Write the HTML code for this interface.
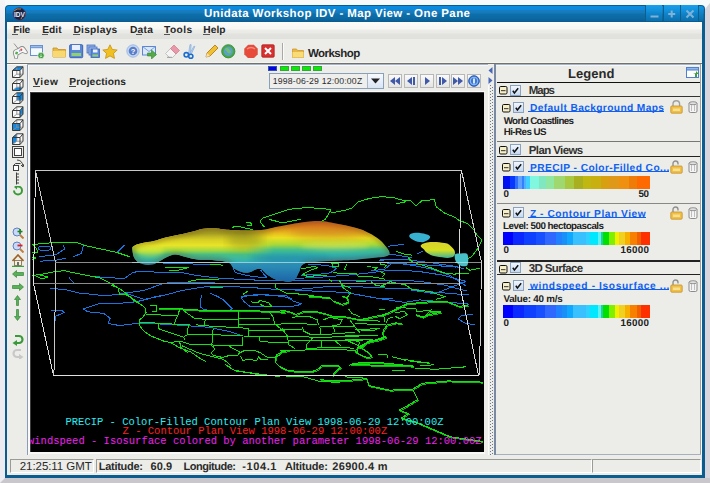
<!DOCTYPE html>
<html><head><meta charset="utf-8">
<style>
*{margin:0;padding:0;box-sizing:border-box}
html,body{width:710px;height:483px;overflow:hidden;background:#f7fafb;font-family:"Liberation Sans",sans-serif;position:relative}
.a{position:absolute;display:block}
.t{position:absolute;white-space:pre;line-height:1;text-rendering:geometricPrecision}
u{text-decoration:underline;text-underline-offset:1px}
</style></head><body>
<div class="a" style="left:0px;top:0px;width:710px;height:483px;background:#f7fafb"></div>
<div class="a" style="left:0px;top:0px;width:5px;height:483px;background:linear-gradient(160deg,#f5f6f8 0,#ecebf1 30px,#ecebf1 100%)"></div>
<div class="a" style="left:705px;top:0px;width:5px;height:483px;background:#d8d6dc"></div>
<svg class="a" style="left:705px;top:0px;" width="5" height="12" viewBox="0 0 5 12"><path d="M0 0H5V3L0 9z" fill="#f7fafb"/></svg>
<div class="a" style="left:0px;top:478px;width:710px;height:5px;background:#c9c7cc"></div>
<svg class="a" style="left:0px;top:478px;" width="6" height="5" viewBox="0 0 6 5"><path d="M0 0H5L0 5z" fill="#eeedf3"/></svg>
<div class="a" style="left:5px;top:5px;width:700px;height:473px;background:#0b5d90;border-radius:4px 4px 0 0"></div>
<div class="a" style="left:6px;top:6px;width:698px;height:15px;border-radius:3px 3px 0 0;background:linear-gradient(#0a8de3 0,#0b88da 4px,#1a7cc4 4px,#147ab8 7px,#0d6fab 8px,#0c69a3 12px,#0a5f96 15px)"></div>
<div class="a" style="left:7px;top:22px;width:695px;height:453px;background:#ecede8"></div>
<div class="a" style="left:7px;top:22px;width:695px;height:17px;background:linear-gradient(#fbfbf9 0,#f6f6f3 7px,#ececE8 8px,#e9e9e5 11px,#e2e2de 12px,#e0e0dc 17px)"></div>
<div class="a" style="left:7px;top:62px;width:695px;height:1px;background:#f4f4f0"></div>
<div class="a" style="left:7px;top:63px;width:695px;height:1px;background:#6e7270"></div>
<div class="a" style="left:7px;top:64px;width:20px;height:1px;background:#fafafa"></div>
<div class="a" style="left:645px;top:5px;width:17px;height:16px;background:linear-gradient(#17a0ec,#128fd8 6px,#0f7fc4 10px,#0c70ae);border-left:1px solid #0a5f8c"></div>
<div class="a" style="left:663px;top:5px;width:17px;height:16px;background:linear-gradient(#17a0ec,#128fd8 6px,#0f7fc4 10px,#0c70ae);border-left:1px solid #0a5f8c"></div>
<div class="a" style="left:680px;top:5px;width:18px;height:16px;background:linear-gradient(#17a0ec,#128fd8 6px,#0f7fc4 10px,#0c70ae);border-left:1px solid #0a5f8c"></div>
<div class="a" style="left:698px;top:6px;width:5px;height:15px;background:linear-gradient(#1496e0,#0c6ca8);border-radius:0 3px 0 0;border-left:1px solid #0a5f8c"></div>
<svg class="a" style="left:645px;top:5px;" width="60" height="16" viewBox="0 0 60 16"><rect x="5.5" y="10.5" width="8" height="2" fill="#7eb2d8"/><path d="M26.7 5.5v7M23.2 9h7" stroke="#7eb2d8" stroke-width="2"/><path d="M41.5 5.5l7 7M48.5 5.5l-7 7" stroke="#7eb2d8" stroke-width="2"/></svg>
<svg class="a" style="left:12px;top:7px;" width="15" height="14" viewBox="0 0 15 14"><circle cx="7.3" cy="7" r="6.3" fill="#1a2040"/><circle cx="7.3" cy="7" r="6.3" fill="none" stroke="#3a4a80" stroke-width="1"/><path d="M2 4 q3-3 7-2" stroke="#c08030" stroke-width="1" fill="none"/><path d="M9 12 l1-2" stroke="#c08030" stroke-width="1"/><text x="7.3" y="9.6" font-family="Liberation Sans" font-weight="bold" font-size="6.5" fill="#e8f0ff" text-anchor="middle">IDV</text></svg>
<div class="a" style="left:12px;top:34px;width:6px;height:1px;background:#555"></div>
<div class="a" style="left:42px;top:34px;width:6px;height:1px;background:#555"></div>
<div class="a" style="left:73px;top:34px;width:7px;height:1px;background:#555"></div>
<div class="a" style="left:136px;top:34px;width:6px;height:1px;background:#555"></div>
<div class="a" style="left:164px;top:34px;width:6px;height:1px;background:#555"></div>
<div class="a" style="left:203px;top:34px;width:7px;height:1px;background:#555"></div>
<svg class="a" style="left:11px;top:42px;" width="18" height="17" viewBox="0 0 18 17"><path d="M3 1.5l4 5" stroke="#888" stroke-width="0.9"/><g transform="rotate(-28 9 10)"><path d="M2.5 8c1-2 3-2.5 5-2h3c2-0.5 4 0 4.5 2.5l0.5 4.5c0 1.5-1.5 2-2.5 1l-2-2.5h-5l-2 2.5c-1 1-2.5 0.5-2.5-1z" fill="#f6f6f6" stroke="#8a8a8a" stroke-width="0.9"/><path d="M4 9.3h3M5.5 7.8v3" stroke="#50b050" stroke-width="1.3"/><circle cx="11.2" cy="8.6" r="1.1" fill="#e85040"/><circle cx="9.4" cy="8.8" r="0.9" fill="#80a8e8"/></g></svg>
<svg class="a" style="left:30px;top:44px;" width="15" height="15" viewBox="0 0 15 15"><rect x="0.5" y="1.5" width="12" height="10" fill="#f4f8ff" stroke="#6890d0" stroke-width="1"/><rect x="0.5" y="1.5" width="12" height="2.2" fill="#9cbcec" stroke="#6890d0" stroke-width="1"/><circle cx="11" cy="11.5" r="3.2" fill="#3a9a3a" stroke="#e8f8e8" stroke-width="0.7"/><path d="M11 9.5v3.5M9.6 11.8l1.4 1.4 1.4-1.4" stroke="#d8f0d0" stroke-width="0.8" fill="none"/></svg>
<svg class="a" style="left:52px;top:45px;" width="15" height="13" viewBox="0 0 15 13"><path d="M1 3h4l1 1.5h7.5v7.5h-12.5z" fill="#e8b848" stroke="#c89020" stroke-width="0.8"/><path d="M1 6h12.5v6h-12.5z" fill="#f8d870"/></svg>
<svg class="a" style="left:69px;top:44px;" width="15" height="15" viewBox="0 0 15 15"><rect x="0.7" y="0.7" width="13" height="13" rx="1" fill="#5a88d8" stroke="#3a60b0" stroke-width="1"/><rect x="3" y="1" width="8" height="5" fill="#e8f0ff"/><rect x="2.5" y="9" width="9.5" height="3" fill="#90d070"/></svg>
<svg class="a" style="left:86px;top:44px;" width="14" height="15" viewBox="0 0 14 15"><rect x="1" y="1" width="8" height="8" fill="#90b0e8" stroke="#4a70c0" stroke-width="0.8"/><rect x="3" y="3" width="8" height="8" fill="#a0c0f0" stroke="#4a70c0" stroke-width="0.8"/><rect x="5" y="5" width="8.5" height="8.5" fill="#5a88d8" stroke="#3a60b0" stroke-width="0.8"/><rect x="7" y="5.5" width="4.5" height="3" fill="#eef"/><rect x="6.5" y="10.5" width="5.5" height="2" fill="#90d070"/></svg>
<svg class="a" style="left:102px;top:44px;" width="16" height="15" viewBox="0 0 16 15"><path d="M8 0.8l2.2 4.6 5 0.6-3.7 3.4 1 5-4.5-2.5-4.5 2.5 1-5-3.7-3.4 5-0.6z" fill="#f0c020" stroke="#c89010" stroke-width="0.8"/></svg>
<svg class="a" style="left:126px;top:44px;" width="14" height="14" viewBox="0 0 14 14"><circle cx="7" cy="7" r="6.2" fill="#c4d8f4" stroke="#98b4e0" stroke-width="0.9"/><circle cx="7" cy="7" r="4.3" fill="#5a7ec8"/><text x="7" y="9.6" font-family="Liberation Sans" font-weight="bold" font-size="7.5" fill="#fff" text-anchor="middle">?</text></svg>
<svg class="a" style="left:142px;top:44px;" width="16" height="15" viewBox="0 0 16 15"><rect x="0.5" y="2.5" width="13" height="8.5" fill="#dce8fa" stroke="#5a86d4" stroke-width="1"/><path d="M0.5 2.5l6.5 5 6.5-5" fill="none" stroke="#7aa0e0" stroke-width="1"/><path d="M5.5 9h4v-3l5 4.5-5 4.5v-3h-4z" fill="#58a848" stroke="#2a8a2a" stroke-width="0.6"/></svg>
<svg class="a" style="left:164px;top:44px;" width="16" height="14" viewBox="0 0 16 14"><path d="M1.5 9.5l5-5 5.5 5.5-5 5z" fill="#f4f4f4" stroke="#b0b0b0" stroke-width="0.7"/><path d="M6.5 4.5l3.5-3.5 5.5 5.5-3.5 3.5z" fill="#e898a8" stroke="#d07888" stroke-width="0.7"/><path d="M3 13.3h5" stroke="#909090" stroke-width="0.9"/></svg>
<svg class="a" style="left:183px;top:44px;" width="13" height="15" viewBox="0 0 13 15"><path d="M5.5 9.5l1.5-9 1.2 0.2-0.8 9z" fill="#b8d0f0" stroke="#80a8d8" stroke-width="0.6"/><path d="M6.5 10l4.5-8 0.9 0.5-3.8 8z" fill="#b8d0f0" stroke="#80a8d8" stroke-width="0.6"/><circle cx="3.3" cy="10.8" r="2.2" fill="none" stroke="#1c6cd0" stroke-width="1.6"/><circle cx="7.8" cy="12.3" r="2.1" fill="none" stroke="#1c6cd0" stroke-width="1.6"/></svg>
<svg class="a" style="left:205px;top:44px;" width="14" height="14" viewBox="0 0 14 14"><path d="M1 13l1-4 8-8 3 3-8 8z" fill="#f0c030" stroke="#b08020" stroke-width="0.9"/><path d="M1 13l1-4 3 3z" fill="#f8e0b0"/></svg>
<svg class="a" style="left:221px;top:44px;" width="15" height="15" viewBox="0 0 15 15"><circle cx="7.3" cy="7.3" r="6.6" fill="#48a848" stroke="#3a8a3a" stroke-width="0.9"/><circle cx="7.3" cy="7.3" r="4.6" fill="#5aa0c8"/><path d="M4 5q2-2 4 0t2 3q-1 2-3 1" fill="#70c070"/></svg>
<svg class="a" style="left:244px;top:44px;" width="14" height="14" viewBox="0 0 14 14"><path d="M4.2 1h5.6l3.7 3.7v5.6l-3.7 3.7h-5.6l-3.7-3.7v-5.6z" fill="#e84a3a" stroke="#d05a50" stroke-width="0.5"/><path d="M3 5q4-3 8 0" stroke="#f89080" stroke-width="1.4" fill="none"/></svg>
<svg class="a" style="left:261px;top:44px;" width="14" height="14" viewBox="0 0 14 14"><rect x="0.8" y="0.8" width="12.4" height="12.4" rx="1" fill="#d83030" stroke="#b02020" stroke-width="0.8"/><path d="M4 4l6 6M10 4l-6 6" stroke="#fff" stroke-width="2"/></svg>
<div class="a" style="left:282px;top:43px;width:1px;height:17px;background:#a8a8a4"></div>
<div class="a" style="left:283px;top:43px;width:1px;height:17px;background:#fafaf8"></div>
<svg class="a" style="left:292px;top:48px;" width="12" height="10" viewBox="0 0 12 10"><path d="M0.5 1h4l1 1.5h6v7h-11z" fill="#e8b848" stroke="#d09828" stroke-width="0.8"/><path d="M0.5 4h11v5.5h-11z" fill="#f8dc78"/></svg>
<div class="a" style="left:27px;top:64px;width:1px;height:391px;background:#8c9cb4"></div>
<svg class="a" style="left:12px;top:66px;" width="12" height="12" viewBox="0 0 12 12"><polygon points="0.5,4.5 4.8,0.8 11.0,0.8 11.0,8.2 8.0,11.5 0.5,11.5" fill="#fafafa"/><polygon points="0.5,4.5 4.8,0.8 11.0,0.8 8.0,4.5" fill="#1288e0"/><path d="M4.8 0.8V8.2H11.0M0.5 11.5L4.8 8.2" fill="none" stroke="#909090" stroke-width="0.9"/><path d="M0.5 4.5H8.0V11.5H0.5ZM0.5 4.5L4.8 0.8H11.0V8.2L8.0 11.5M8.0 4.5L11.0 0.8" fill="none" stroke="#3a3a3a" stroke-width="1"/></svg>
<svg class="a" style="left:12px;top:79px;" width="12" height="12" viewBox="0 0 12 12"><polygon points="0.5,4.5 4.8,0.8 11.0,0.8 11.0,8.2 8.0,11.5 0.5,11.5" fill="#fafafa"/><polygon points="0.5,11.5 4.8,8.2 11.0,8.2 8.0,11.5" fill="#1288e0"/><path d="M4.8 0.8V8.2H11.0M0.5 11.5L4.8 8.2" fill="none" stroke="#909090" stroke-width="0.9"/><path d="M0.5 4.5H8.0V11.5H0.5ZM0.5 4.5L4.8 0.8H11.0V8.2L8.0 11.5M8.0 4.5L11.0 0.8" fill="none" stroke="#3a3a3a" stroke-width="1"/></svg>
<svg class="a" style="left:12px;top:92px;" width="12" height="12" viewBox="0 0 12 12"><polygon points="0.5,4.5 4.8,0.8 11.0,0.8 11.0,8.2 8.0,11.5 0.5,11.5" fill="#fafafa"/><polygon points="4.8,0.8 11.0,0.8 11.0,8.2 4.8,8.2" fill="#1288e0"/><path d="M4.8 0.8V8.2H11.0M0.5 11.5L4.8 8.2" fill="none" stroke="#909090" stroke-width="0.9"/><path d="M0.5 4.5H8.0V11.5H0.5ZM0.5 4.5L4.8 0.8H11.0V8.2L8.0 11.5M8.0 4.5L11.0 0.8" fill="none" stroke="#3a3a3a" stroke-width="1"/></svg>
<svg class="a" style="left:12px;top:106px;" width="12" height="12" viewBox="0 0 12 12"><polygon points="0.5,4.5 4.8,0.8 11.0,0.8 11.0,8.2 8.0,11.5 0.5,11.5" fill="#fafafa"/><polygon points="8.0,4.5 11.0,0.8 11.0,8.2 8.0,11.5" fill="#1288e0"/><path d="M4.8 0.8V8.2H11.0M0.5 11.5L4.8 8.2" fill="none" stroke="#909090" stroke-width="0.9"/><path d="M0.5 4.5H8.0V11.5H0.5ZM0.5 4.5L4.8 0.8H11.0V8.2L8.0 11.5M8.0 4.5L11.0 0.8" fill="none" stroke="#3a3a3a" stroke-width="1"/></svg>
<svg class="a" style="left:12px;top:119px;" width="12" height="12" viewBox="0 0 12 12"><polygon points="0.5,4.5 4.8,0.8 11.0,0.8 11.0,8.2 8.0,11.5 0.5,11.5" fill="#fafafa"/><polygon points="0.5,4.5 8.0,4.5 8.0,11.5 0.5,11.5" fill="#1288e0"/><path d="M4.8 0.8V8.2H11.0M0.5 11.5L4.8 8.2" fill="none" stroke="#909090" stroke-width="0.9"/><path d="M0.5 4.5H8.0V11.5H0.5ZM0.5 4.5L4.8 0.8H11.0V8.2L8.0 11.5M8.0 4.5L11.0 0.8" fill="none" stroke="#3a3a3a" stroke-width="1"/></svg>
<svg class="a" style="left:12px;top:133px;" width="12" height="12" viewBox="0 0 12 12"><polygon points="0.5,4.5 4.8,0.8 11.0,0.8 11.0,8.2 8.0,11.5 0.5,11.5" fill="#fafafa"/><polygon points="0.5,4.5 4.8,0.8 4.8,8.2 0.5,11.5" fill="#1288e0"/><path d="M4.8 0.8V8.2H11.0M0.5 11.5L4.8 8.2" fill="none" stroke="#909090" stroke-width="0.9"/><path d="M0.5 4.5H8.0V11.5H0.5ZM0.5 4.5L4.8 0.8H11.0V8.2L8.0 11.5M8.0 4.5L11.0 0.8" fill="none" stroke="#3a3a3a" stroke-width="1"/></svg>
<svg class="a" style="left:12px;top:146px;" width="12" height="12" viewBox="0 0 12 12"><rect x="0.5" y="0.5" width="11" height="11" fill="none" stroke="#404040"/><rect x="2.5" y="2.5" width="7" height="7" fill="#fff" stroke="#404040"/></svg>
<svg class="a" style="left:12px;top:159px;" width="12" height="12" viewBox="0 0 12 12"><path d="M5 1q5 0 6 6" stroke="#404040" fill="none"/><path d="M9 6l2 2 1-3" stroke="#404040" fill="none"/><rect x="1.5" y="6.5" width="5" height="5" fill="#fff" stroke="#404040"/><path d="M1.5 6.5l2-2h5" stroke="#404040" fill="none"/></svg>
<svg class="a" style="left:14px;top:172px;" width="8" height="13" viewBox="0 0 8 13"><path d="M2.5 0.5v12" stroke="#404040" stroke-width="1"/><path d="M3 2h2M3 5h2M3 8h2M3 11h2" stroke="#404040" stroke-width="1"/></svg>
<svg class="a" style="left:12px;top:186px;" width="12" height="10" viewBox="0 0 12 10"><path d="M2 4.5a4 4 0 1 0 4-4h-1" stroke="#3a9a3a" stroke-width="2" fill="none"/><path d="M5 -1.5v5l-3-2.5z" fill="#3a9a3a"/></svg>
<svg class="a" style="left:12px;top:227px;" width="12" height="12" viewBox="0 0 12 12"><circle cx="5" cy="5" r="4" fill="#c8d8f8" stroke="#6080c0"/><path d="M8 8l3.5 3.5" stroke="#c08040" stroke-width="2"/><path d="M8 2v5M5.5 4.5h5" stroke="#208020" stroke-width="1.6"/></svg>
<svg class="a" style="left:12px;top:241px;" width="12" height="12" viewBox="0 0 12 12"><circle cx="5" cy="5" r="4" fill="#c8d8f8" stroke="#6080c0"/><path d="M8 8l3.5 3.5" stroke="#c08040" stroke-width="2"/><path d="M5.5 4.5h5" stroke="#e02020" stroke-width="1.8"/></svg>
<svg class="a" style="left:12px;top:254px;" width="12" height="13" viewBox="0 0 12 13"><path d="M0.5 7l5.5-6 5.5 6" stroke="#a06020" stroke-width="1.6" fill="none"/><rect x="2.5" y="6.5" width="7" height="5" fill="#f0f0e0" stroke="#806040" stroke-width="0.8"/><rect x="5" y="8" width="2" height="4" fill="#707070"/><path d="M0 12.5h12" stroke="#40a040" stroke-width="1.4"/></svg>
<svg class="a" style="left:12px;top:270px;" width="12" height="8" viewBox="0 0 12 8"><path d="M0.5 4l4-3.5v2h7v3h-7v2z" fill="#58b058" stroke="#2a7a2a" stroke-width="0.6"/></svg>
<svg class="a" style="left:12px;top:283px;" width="12" height="8" viewBox="0 0 12 8"><path d="M11.5 4l-4-3.5v2h-7v3h7v2z" fill="#58b058" stroke="#2a7a2a" stroke-width="0.6"/></svg>
<svg class="a" style="left:14px;top:295px;" width="7" height="11" viewBox="0 0 7 11"><path d="M3.5 0.5l3 4h-2v6h-2v-6h-2z" fill="#58b058" stroke="#2a7a2a" stroke-width="0.6"/></svg>
<svg class="a" style="left:14px;top:309px;" width="7" height="12" viewBox="0 0 7 12"><path d="M3.5 11.5l3-4h-2v-7h-2v7h-2z" fill="#58b058" stroke="#2a7a2a" stroke-width="0.6"/></svg>
<svg class="a" style="left:12px;top:334px;" width="12" height="12" viewBox="0 0 12 12"><path d="M3 2h4a3.5 3.5 0 0 1 0 7h-3" stroke="#3a9a3a" stroke-width="2.2" fill="none"/><path d="M5 6l-4.5 3 4.5 3z" fill="#3a9a3a"/></svg>
<svg class="a" style="left:12px;top:348px;" width="12" height="11" viewBox="0 0 12 11"><path d="M9 2h-4a3.5 3.5 0 0 0 0 7h3" stroke="#c8c8c8" stroke-width="2.2" fill="none"/><path d="M7 6l4.5 3-4.5 3z" fill="#c8c8c8"/></svg>
<div class="a" style="left:28px;top:64px;width:460px;height:391px;background:#ecede8"></div>
<div class="a" style="left:27px;top:64px;width:461px;height:1px;background:#a8b4c8"></div>
<div class="a" style="left:28px;top:65px;width:460px;height:1px;background:#f8f8f8"></div>
<div class="a" style="left:28px;top:65px;width:1px;height:390px;background:#f8f8f8"></div>
<div class="a" style="left:33px;top:86px;width:7px;height:1px;background:#444"></div>
<div class="a" style="left:69px;top:86px;width:7px;height:1px;background:#444"></div>
<div class="a" style="left:268px;top:66px;width:9px;height:5px;background:#0000f0;border:1px solid #3050a0"></div>
<div class="a" style="left:280px;top:66px;width:9px;height:5px;background:#00f000;border:1px solid #40a040"></div>
<div class="a" style="left:291px;top:66px;width:9px;height:5px;background:#00f000;border:1px solid #40a040"></div>
<div class="a" style="left:302px;top:66px;width:9px;height:5px;background:#00f000;border:1px solid #40a040"></div>
<div class="a" style="left:313px;top:66px;width:9px;height:5px;background:#00f000;border:1px solid #40a040"></div>
<div class="a" style="left:269px;top:73px;width:115px;height:16px;background:#eeeeec;border:1px solid #8aa0b8"></div>
<div class="a" style="left:367px;top:74px;width:16px;height:14px;background:linear-gradient(#f8faff,#d8e4f4);border-left:1px solid #a8b8c8"></div>
<svg class="a" style="left:370px;top:78px;" width="12" height="6" viewBox="0 0 12 6"><path d="M1 0.5h9l-4.5 5z" fill="#222"/></svg>
<div class="a" style="left:388px;top:74px;width:14px;height:14px;background:linear-gradient(#fafafa,#e4e4e2);border:1px solid #b8b8b8"></div>
<svg class="a" style="left:388px;top:75px;" width="14" height="12" viewBox="0 0 14 12"><path d="M2 6l5-4v8zM7 6l5-4v8z" fill="#4058a8"/></svg>
<div class="a" style="left:404px;top:74px;width:14px;height:14px;background:linear-gradient(#fafafa,#e4e4e2);border:1px solid #b8b8b8"></div>
<svg class="a" style="left:404px;top:75px;" width="14" height="12" viewBox="0 0 14 12"><path d="M3 6l5-4v8z" fill="#4058a8"/><rect x="9" y="2" width="2" height="8" fill="#4058a8"/></svg>
<div class="a" style="left:420px;top:74px;width:14px;height:14px;background:linear-gradient(#fafafa,#e4e4e2);border:1px solid #b8b8b8"></div>
<svg class="a" style="left:420px;top:75px;" width="14" height="12" viewBox="0 0 14 12"><path d="M5 2l5 4-5 4z" fill="#4058a8"/></svg>
<div class="a" style="left:436px;top:74px;width:14px;height:14px;background:linear-gradient(#fafafa,#e4e4e2);border:1px solid #b8b8b8"></div>
<svg class="a" style="left:436px;top:75px;" width="14" height="12" viewBox="0 0 14 12"><rect x="3" y="2" width="2" height="8" fill="#4058a8"/><path d="M6 2l5 4-5 4z" fill="#4058a8"/></svg>
<div class="a" style="left:451px;top:74px;width:14px;height:14px;background:linear-gradient(#fafafa,#e4e4e2);border:1px solid #b8b8b8"></div>
<svg class="a" style="left:451px;top:75px;" width="14" height="12" viewBox="0 0 14 12"><path d="M2 2l5 4-5 4zM7 2l5 4-5 4z" fill="#4058a8"/></svg>
<div class="a" style="left:467px;top:74px;width:14px;height:14px;background:linear-gradient(#fafafa,#e4e4e2);border:1px solid #b8b8b8"></div>
<svg class="a" style="left:467px;top:75px;" width="14" height="12" viewBox="0 0 14 12"><circle cx="7" cy="6" r="5.3" fill="#3a78d8" stroke="#2858b0"/><circle cx="7" cy="6" r="3.8" fill="none" stroke="#b0d0f8" stroke-width="0.8"/><rect x="6.2" y="3.5" width="1.6" height="5" fill="#fff"/></svg>
<div class="a" style="left:29px;top:91px;width:456px;height:1px;background:#fafafa"></div>
<div class="a" style="left:29px;top:91px;width:1px;height:363px;background:#fafafa"></div>
<div class="a" style="left:29px;top:452px;width:456px;height:2px;background:#f8f8f6"></div>
<div class="a" style="left:30px;top:92px;width:454px;height:360px;background:#000;border-top:1px solid #3c3c3c;border-left:1px solid #3c3c3c"></div>
<svg class="a" style="left:30px;top:93px" width="454" height="360" viewBox="30 93 454 360" shape-rendering="auto"><defs><linearGradient id="blob" gradientUnits="userSpaceOnUse" x1="0" y1="221" x2="0" y2="263"><stop offset="0" stop-color="#c8602a"/><stop offset="0.12" stop-color="#e2801c"/><stop offset="0.28" stop-color="#e8b820"/><stop offset="0.4" stop-color="#ece020"/><stop offset="0.56" stop-color="#a8d838"/><stop offset="0.68" stop-color="#48c088"/><stop offset="0.82" stop-color="#30b0b0"/><stop offset="1" stop-color="#2a98c0"/></linearGradient><linearGradient id="blobL" gradientUnits="userSpaceOnUse" x1="0" y1="221" x2="0" y2="263"><stop offset="0" stop-color="#8a8420"/><stop offset="0.3" stop-color="#a8a024"/><stop offset="0.45" stop-color="#d8d024"/><stop offset="0.58" stop-color="#e8e428"/><stop offset="0.7" stop-color="#a0d840"/><stop offset="0.8" stop-color="#48c088"/><stop offset="1" stop-color="#30b0b8"/></linearGradient><linearGradient id="mL" gradientUnits="userSpaceOnUse" x1="130" y1="0" x2="290" y2="0"><stop offset="0" stop-color="#fff"/><stop offset="0.72" stop-color="#fff"/><stop offset="0.9" stop-color="#000"/></linearGradient><mask id="maskL" maskUnits="userSpaceOnUse" x="100" y="200" width="250" height="90"><rect x="100" y="200" width="250" height="90" fill="url(#mL)"/></mask><linearGradient id="lump" gradientUnits="userSpaceOnUse" x1="0" y1="262" x2="0" y2="282"><stop offset="0" stop-color="#2e96b8"/><stop offset="1" stop-color="#1c64a8"/></linearGradient><linearGradient id="yb" gradientUnits="userSpaceOnUse" x1="0" y1="242" x2="0" y2="258"><stop offset="0" stop-color="#d8d030"/><stop offset="0.5" stop-color="#d8e020"/><stop offset="1" stop-color="#40b098"/></linearGradient></defs><path d="M40.0 261.2 L54.6 260.4 L65.5 258.3" stroke="#1a74e0" stroke-width="1.0" fill="none" stroke-linejoin="round" shape-rendering="crispEdges" /><path d="M38.7 256.8 L56.0 254.6 L64.8 248.8 L62.6 244.5" stroke="#1a74e0" stroke-width="1.0" fill="none" stroke-linejoin="round" shape-rendering="crispEdges" /><path d="M83.6 244.5 L81.4 253.2 L73.5 256.8" stroke="#1a74e0" stroke-width="1.0" fill="none" stroke-linejoin="round" shape-rendering="crispEdges" /><path d="M124.2 245.2 L117.0 252.5 L130.0 256.8" stroke="#1a74e0" stroke-width="1.0" fill="none" stroke-linejoin="round" shape-rendering="crispEdges" /><path d="M69.1 277.8 L72.0 280.7 L73.5 282.9" stroke="#1a74e0" stroke-width="1.0" fill="none" stroke-linejoin="round" shape-rendering="crispEdges" /><path d="M90.9 276.4 L124.2 278.6 L132.6 272.7 L137.7 271.5 L156.7 272.1 L182.0 272.7 L196.0 275.3 L215.0 277.8 L235.3 279.1 L260.7 280.3 L300.0 281.0 L320.3 280.4 L358.4 280.4 L385.0 280.4 L418.0 281.1 L443.4 284.9 L467.5 291.2" stroke="#1a74e0" stroke-width="1.0" fill="none" stroke-linejoin="round" shape-rendering="crispEdges" /><path d="M125.0 293.0 L144.0 290.5 L163.0 283.5 L173.2 282.2 L188.4 282.2 L215.0 282.2" stroke="#1a74e0" stroke-width="1.0" fill="none" stroke-linejoin="round" shape-rendering="crispEdges" /><path d="M50.0 288.6 L64.5 289.3 L79.0 293.0 L106.5 295.9 L125.4 293.0 L144.0 299.4 L163.0 295.6 L182.0 290.5 L201.0 287.3 L215.0 286.1 L248.0 287.3 L273.4 289.2 L300.0 289.2 L333.0 286.1 L358.4 286.8 L385.0 288.0 L405.3 288.0 L430.7 291.8 L468.7 295.0" stroke="#1a74e0" stroke-width="1.0" fill="none" stroke-linejoin="round" shape-rendering="crispEdges" /><path d="M130.0 302.5 L142.4 300.6 L154.8 296.9 L164.8 295.0" stroke="#1a74e0" stroke-width="1.0" fill="none" stroke-linejoin="round" shape-rendering="crispEdges" /><path d="M150.0 298.0 L137.0 301.7 L116.7 303.6 L99.3 303.6 L83.3 308.9 L87.7 311.8 L103.6 313.3 L110.1 318.3 L108.0 323.4 L119.6 325.6 L137.0 323.4 L167.3 324.2 L182.2 325.4 L209.5 327.3 L214.9 328.5 L229.8 331.6 L241.0 335.4" stroke="#1a74e0" stroke-width="1.0" fill="none" stroke-linejoin="round" shape-rendering="crispEdges" /><path d="M51.4 310.4 L61.6 310.4 L64.5 312.5 L55.8 316.2 L55.8 320.5" stroke="#1a74e0" stroke-width="1.0" fill="none" stroke-linejoin="round" shape-rendering="crispEdges" /><path d="M44.5 246.2 L50.3 247.0 L50.3 249.8 L44.5 250.6 L38.7 249.8 L38.7 247.0 L44.5 246.2" stroke="#1a74e0" stroke-width="1.0" fill="none" stroke-linejoin="round" shape-rendering="crispEdges" /><path d="M202.0 295.0 L200.2 301.2 L200.8 307.4 L204.5 309.9 L217.4 310.5 L229.8 310.5 L232.3 308.7 L229.8 306.2 L223.6 300.0 L214.9 295.0" stroke="#1a74e0" stroke-width="1.0" fill="none" stroke-linejoin="round" shape-rendering="crispEdges" /><path d="M241.0 296.9 L243.5 301.2 L249.7 306.2 L285.0 306.2 L287.5 306.8 L297.4 305.6 L301.1 303.7 L293.7 301.2 L287.5 297.5 L280.0 296.2 L260.0 294.0 L241.0 296.9" stroke="#1a74e0" stroke-width="1.0" fill="none" stroke-linejoin="round" shape-rendering="crispEdges" /><path d="M301.3 275.3 L320.3 274.1 L330.5 272.8 L336.8 268.4 L326.7 265.2 L307.7 264.6" stroke="#1a74e0" stroke-width="1.0" fill="none" stroke-linejoin="round" shape-rendering="crispEdges" /><path d="M295.0 278.5 L320.3 277.2 L345.7 275.3 L364.7 273.4 L385.0 270.9 L405.3 270.3 L424.4 272.2 L443.4 275.3 L464.9 281.1" stroke="#1a74e0" stroke-width="1.0" fill="none" stroke-linejoin="round" shape-rendering="crispEdges" /><path d="M295.0 290.6 L320.3 291.2 L345.7 292.5 L379.8 298.7 L404.7 302.4 L419.6 299.9 L435.0 301.2 L445.6 301.9 L469.5 304.2" stroke="#1a74e0" stroke-width="1.0" fill="none" stroke-linejoin="round" shape-rendering="crispEdges" /><path d="M355.0 294.3 L379.8 298.7" stroke="#1a74e0" stroke-width="1.0" fill="none" stroke-linejoin="round" shape-rendering="crispEdges" /><path d="M410.9 290.0 L423.3 291.9 L435.0 293.7 L466.0 281.4" stroke="#1a74e0" stroke-width="1.0" fill="none" stroke-linejoin="round" shape-rendering="crispEdges" /><path d="M380.0 253.8 L392.7 254.4 L411.7 257.6" stroke="#1a74e0" stroke-width="1.0" fill="none" stroke-linejoin="round" shape-rendering="crispEdges" /><path d="M416.8 253.8 L423.1 251.3" stroke="#1a74e0" stroke-width="1.0" fill="none" stroke-linejoin="round" shape-rendering="crispEdges" /><path d="M371.0 270.9 L385.0 269.0 L392.7 262.7 L411.7 265.2 L430.7 269.0 L449.7 275.3 L466.2 286.1" stroke="#1a74e0" stroke-width="1.0" fill="none" stroke-linejoin="round" shape-rendering="crispEdges" /><path d="M380.0 260.1 L405.3 259.5 L430.7 262.7 L456.0 266.5 L463.7 269.0" stroke="#1a74e0" stroke-width="1.0" fill="none" stroke-linejoin="round" shape-rendering="crispEdges" /><path d="M380.0 262.7 L405.3 263.9 L430.7 265.2 L456.0 267.1" stroke="#1a74e0" stroke-width="1.0" fill="none" stroke-linejoin="round" shape-rendering="crispEdges" /><path d="M378.7 260.1 L385.0 259.5" stroke="#1a74e0" stroke-width="1.0" fill="none" stroke-linejoin="round" shape-rendering="crispEdges" /><path d="M387.5 246.3 L404.0 244.2" stroke="#1a74e0" stroke-width="1.0" fill="none" stroke-linejoin="round" shape-rendering="crispEdges" /><path d="M472.9 314.4 L461.5 315.6 L458.1 319.0 L466.0 323.5 L475.2 324.7" stroke="#1a74e0" stroke-width="1.0" fill="none" stroke-linejoin="round" shape-rendering="crispEdges" /><path d="M163.0 263.2 L188.4 263.9 L215.0 264.5" stroke="#1a74e0" stroke-width="1.0" fill="none" stroke-linejoin="round" shape-rendering="crispEdges" /><path d="M222.7 299.4 L210.0 293.0" stroke="#1a74e0" stroke-width="1.0" fill="none" stroke-linejoin="round" shape-rendering="crispEdges" /><path d="M240.4 299.4 L244.2 295.6 L260.7 294.9 L286.0 295.6 L292.4 299.4" stroke="#1a74e0" stroke-width="1.0" fill="none" stroke-linejoin="round" shape-rendering="crispEdges" /><path d="M232.8 267.7 L235.3 272.7 L251.8 276.5 L267.0 277.8" stroke="#1a74e0" stroke-width="1.0" fill="none" stroke-linejoin="round" shape-rendering="crispEdges" /><path d="M260.7 270.2 L263.2 273.4 L267.0 277.8" stroke="#1a74e0" stroke-width="1.0" fill="none" stroke-linejoin="round" shape-rendering="crispEdges" /><path d="M392.7 298.8 L380.0 298.8" stroke="#1a74e0" stroke-width="1.0" fill="none" stroke-linejoin="round" shape-rendering="crispEdges" /><path d="M159.3 309.7 L179.1 309.7 L195.9 310.9 L210.7 311.5 L270.3 312.1 L285.7 313.4" stroke="#10b810" stroke-width="1.0" fill="none" stroke-linejoin="round" shape-rendering="crispEdges" /><path d="M309.3 297.2 L330.4 298.5 L334.1 302.2 L342.8 305.3 L349.0 303.5 L347.8 298.5 L342.8 297.2" stroke="#10b810" stroke-width="1.0" fill="none" stroke-linejoin="round" shape-rendering="crispEdges" /><path d="M280.7 311.5 L288.2 312.1 L296.8 315.3 L305.5 312.1 L318.0 312.8 L325.4 314.6 L332.9 317.1 L345.3 317.7 L355.2 319.6 L360.7 320.8 L374.3 317.7 L384.3 315.8 L393.0 312.1 L402.9 307.1 L407.9 304.7 L424.0 303.4 L435.7 302.2 L448.5 302.9 L459.9 307.4 L469.0 306.3" stroke="#10b810" stroke-width="1.0" fill="none" stroke-linejoin="round" shape-rendering="crispEdges" /><path d="M416.6 315.8 L424.0 318.3 L430.2 312.7 L435.7 312.1 L441.7 313.1 L425.7 316.6" stroke="#10b810" stroke-width="1.0" fill="none" stroke-linejoin="round" shape-rendering="crispEdges" /><path d="M402.9 324.5 L396.7 323.9 L388.0 325.8 L384.3 330.8 L383.0 335.7 L386.8 338.2 L380.5 340.7 L368.1 343.2 L360.7 349.4" stroke="#10b810" stroke-width="1.0" fill="none" stroke-linejoin="round" shape-rendering="crispEdges" /><path d="M290.3 351.2 L282.5 352.9 L276.8 356.3 L275.7 363.0 L280.2 367.5 L287.0 370.9 L298.2 372.6 L314.0 372.1 L319.6 369.8 L321.9 367.0 L338.8 366.4 L341.1 368.7 L337.7 370.9 L334.3 374.3 L333.2 377.1" stroke="#10b810" stroke-width="1.0" fill="none" stroke-linejoin="round" shape-rendering="crispEdges" /><path d="M386.3 337.3 L378.7 339.9 L371.0 342.4 L362.2 346.2 L358.4 348.7 L355.8 352.5 L360.9 355.7 L368.5 358.9 L372.3 357.6 L371.0 355.1 L362.2 348.7" stroke="#10b810" stroke-width="1.0" fill="none" stroke-linejoin="round" shape-rendering="crispEdges" /><path d="M350.8 365.9 L358.4 364.0 L377.4 363.3 L396.4 365.2 L414.1 367.1 L396.4 366.5 L364.7 365.9 L350.8 365.9" stroke="#10b810" stroke-width="1.0" fill="none" stroke-linejoin="round" shape-rendering="crispEdges" /><path d="M320.7 380.8 L344.0 381.9 L367.2 379.6 L369.5 386.6 L390.5 391.2 L413.7 390.0 L423.0 384.3 L448.6 381.9 L483.5 383.1" stroke="#10b810" stroke-width="1.0" fill="none" stroke-linejoin="round" shape-rendering="crispEdges" /><path d="M413.7 391.2 L418.4 400.5 L406.7 407.5 L399.7 411.0 L409.1 414.5 L402.1 419.1 L418.4 423.8 L450.9 437.7 L483.5 442.4" stroke="#10b810" stroke-width="1.0" fill="none" stroke-linejoin="round" shape-rendering="crispEdges" /><path d="M32.9 244.5 L51.7 242.8 L76.4 242.3 L83.6 245.2 L117.0 252.5 L130.0 256.8" stroke="#12e412" stroke-width="1.0" fill="none" stroke-linejoin="round" shape-rendering="crispEdges" /><path d="M32.0 244.0 L36.0 248.0 L38.0 252.0 L32.0 253.0" stroke="#12e412" stroke-width="1.0" fill="none" stroke-linejoin="round" shape-rendering="crispEdges" /><path d="M32.0 257.0 L36.0 258.0 L32.0 260.0" stroke="#12e412" stroke-width="1.0" fill="none" stroke-linejoin="round" shape-rendering="crispEdges" /><path d="M32.0 275.7 L46.0 273.5 L53.2 272.0 L64.8 270.6 L73.5 272.8 L99.6 277.8 L111.2 283.6 L122.8 290.9 L130.1 296.8 L135.0 301.2 L142.4 305.6 L144.9 308.0 L146.1 312.4 L143.7 316.1 L139.9 319.8 L139.3 321.7 L139.9 326.1 L143.7 331.0 L151.1 336.0 L157.3 338.5 L163.5 341.0 L171.0 342.8 L178.4 347.2 L184.7 349.7 L190.9 352.1 L200.8 358.9 L206.3 361.7" stroke="#12e412" stroke-width="1.0" fill="none" stroke-linejoin="round" shape-rendering="crispEdges" /><path d="M36.0 274.0 L48.0 277.0 L42.0 279.0 L36.0 276.0" stroke="#12e412" stroke-width="1.0" fill="none" stroke-linejoin="round" shape-rendering="crispEdges" /><path d="M110.9 285.0 L118.0 287.9 L119.6 294.4 L126.8 295.1 L134.0 299.5 L139.9 303.8" stroke="#12e412" stroke-width="1.0" fill="none" stroke-linejoin="round" shape-rendering="crispEdges" /><path d="M164.3 267.0 L188.4 267.7 L178.2 270.2 L169.4 270.2" stroke="#12e412" stroke-width="1.0" fill="none" stroke-linejoin="round" shape-rendering="crispEdges" /><path d="M188.4 281.6 L201.0 279.1 L218.9 279.1" stroke="#12e412" stroke-width="1.0" fill="none" stroke-linejoin="round" shape-rendering="crispEdges" /><path d="M210.0 264.5 L222.7 265.1" stroke="#12e412" stroke-width="1.0" fill="none" stroke-linejoin="round" shape-rendering="crispEdges" /><path d="M210.0 288.0 L222.7 287.3" stroke="#12e412" stroke-width="1.0" fill="none" stroke-linejoin="round" shape-rendering="crispEdges" /><path d="M275.9 282.9 L275.9 288.0 L286.0 293.0 L298.7 293.7" stroke="#12e412" stroke-width="1.0" fill="none" stroke-linejoin="round" shape-rendering="crispEdges" /><path d="M243.0 294.3 L248.0 291.1" stroke="#12e412" stroke-width="1.0" fill="none" stroke-linejoin="round" shape-rendering="crispEdges" /><path d="M158.6 308.7 L178.4 308.7 L195.2 309.9 L210.0 310.5 L269.6 311.1 L285.0 312.4" stroke="#12e412" stroke-width="1.0" fill="none" stroke-linejoin="round" shape-rendering="crispEdges" /><path d="M150.0 306.0 L156.0 305.0 L157.0 311.0 L152.0 312.0" stroke="#12e412" stroke-width="1.0" fill="none" stroke-linejoin="round" shape-rendering="crispEdges" /><path d="M146.1 314.3 L157.3 314.9 L178.4 315.5" stroke="#12e412" stroke-width="1.0" fill="none" stroke-linejoin="round" shape-rendering="crispEdges" /><path d="M179.7 309.3 L177.8 315.5 L176.0 318.6 L174.7 323.6" stroke="#12e412" stroke-width="1.0" fill="none" stroke-linejoin="round" shape-rendering="crispEdges" /><path d="M139.9 322.3 L154.8 323.0 L174.7 324.2 L189.6 324.8" stroke="#12e412" stroke-width="1.0" fill="none" stroke-linejoin="round" shape-rendering="crispEdges" /><path d="M183.4 310.5 L189.6 314.9 L194.6 318.6 L205.8 319.2 L238.5 319.2" stroke="#12e412" stroke-width="1.0" fill="none" stroke-linejoin="round" shape-rendering="crispEdges" /><path d="M205.2 319.2 L204.5 326.1" stroke="#12e412" stroke-width="1.0" fill="none" stroke-linejoin="round" shape-rendering="crispEdges" /><path d="M158.6 324.2 L158.0 328.5 L183.4 337.2 L184.7 339.7" stroke="#12e412" stroke-width="1.0" fill="none" stroke-linejoin="round" shape-rendering="crispEdges" /><path d="M188.4 325.4 L187.1 334.8 L183.4 337.2" stroke="#12e412" stroke-width="1.0" fill="none" stroke-linejoin="round" shape-rendering="crispEdges" /><path d="M188.4 334.8 L210.0 334.8 L243.5 335.4" stroke="#12e412" stroke-width="1.0" fill="none" stroke-linejoin="round" shape-rendering="crispEdges" /><path d="M195.8 324.8 L210.0 326.1 L248.5 328.3" stroke="#12e412" stroke-width="1.0" fill="none" stroke-linejoin="round" shape-rendering="crispEdges" /><path d="M169.8 342.2 L182.2 341.6 L189.6 344.1 L210.0 344.7 L216.2 345.3 L242.3 345.3" stroke="#12e412" stroke-width="1.0" fill="none" stroke-linejoin="round" shape-rendering="crispEdges" /><path d="M179.7 342.2 L180.9 347.2 L188.4 353.4" stroke="#12e412" stroke-width="1.0" fill="none" stroke-linejoin="round" shape-rendering="crispEdges" /><path d="M182.2 345.9 L199.6 353.4 L209.0 355.8 L222.5 359.2 L227.0 362.0 L230.4 365.4 L229.3 367.7 L236.1 371.1 L245.1 372.2 L258.6 373.9 L280.0 376.7" stroke="#12e412" stroke-width="1.0" fill="none" stroke-linejoin="round" shape-rendering="crispEdges" /><path d="M238.5 318.0 L269.6 318.0" stroke="#12e412" stroke-width="1.0" fill="none" stroke-linejoin="round" shape-rendering="crispEdges" /><path d="M238.5 324.2 L274.6 324.8 L285.0 323.6 L302.4 323.6 L317.3 324.8" stroke="#12e412" stroke-width="1.0" fill="none" stroke-linejoin="round" shape-rendering="crispEdges" /><path d="M248.5 330.4 L285.0 331.0" stroke="#12e412" stroke-width="1.0" fill="none" stroke-linejoin="round" shape-rendering="crispEdges" /><path d="M243.5 336.6 L285.0 336.6 L319.8 337.2 L359.5 336.6" stroke="#12e412" stroke-width="1.0" fill="none" stroke-linejoin="round" shape-rendering="crispEdges" /><path d="M259.7 341.0 L269.6 342.2 L288.5 342.3" stroke="#12e412" stroke-width="1.0" fill="none" stroke-linejoin="round" shape-rendering="crispEdges" /><path d="M238.5 311.1 L238.5 327.9" stroke="#12e412" stroke-width="1.0" fill="none" stroke-linejoin="round" shape-rendering="crispEdges" /><path d="M248.5 328.3 L248.5 336.0" stroke="#12e412" stroke-width="1.0" fill="none" stroke-linejoin="round" shape-rendering="crispEdges" /><path d="M242.9 336.6 L242.9 345.9" stroke="#12e412" stroke-width="1.0" fill="none" stroke-linejoin="round" shape-rendering="crispEdges" /><path d="M213.1 328.5 L211.8 345.9 L213.5 346.3 L214.6 349.1 L211.3 353.0 L213.5 355.3 L222.5 357.5 L228.2 355.8 L237.2 355.8 L239.4 353.0 L245.1 350.2 L254.1 350.2 L260.8 353.0 L267.6 357.5 L274.4 357.5 L280.0 355.3" stroke="#12e412" stroke-width="1.0" fill="none" stroke-linejoin="round" shape-rendering="crispEdges" /><path d="M259.7 337.2 L259.7 341.0" stroke="#12e412" stroke-width="1.0" fill="none" stroke-linejoin="round" shape-rendering="crispEdges" /><path d="M269.6 312.4 L273.3 317.4 L274.6 323.6 L282.0 329.8 L285.0 331.0" stroke="#12e412" stroke-width="1.0" fill="none" stroke-linejoin="round" shape-rendering="crispEdges" /><path d="M228.2 345.7 L239.4 351.9" stroke="#12e412" stroke-width="1.0" fill="none" stroke-linejoin="round" shape-rendering="crispEdges" /><path d="M240.6 356.4 L242.8 360.4 L250.7 359.2 L256.3 360.9 L258.6 357.0 L260.8 359.2 L267.6 359.8" stroke="#12e412" stroke-width="1.0" fill="none" stroke-linejoin="round" shape-rendering="crispEdges" /><path d="M251.0 301.8 L257.2 303.1 L259.7 300.6 L268.4 302.5 L272.1 306.8 L264.6 306.2 L259.7 304.3" stroke="#12e412" stroke-width="1.0" fill="none" stroke-linejoin="round" shape-rendering="crispEdges" /><path d="M279.5 309.9 L285.0 311.1" stroke="#12e412" stroke-width="1.0" fill="none" stroke-linejoin="round" shape-rendering="crispEdges" /><path d="M308.6 296.2 L329.7 297.5 L333.4 301.2 L342.1 304.3 L348.3 302.5 L347.1 297.5 L342.1 296.2" stroke="#12e412" stroke-width="1.0" fill="none" stroke-linejoin="round" shape-rendering="crispEdges" /><path d="M348.3 308.7 L352.0 313.6 L360.0 316.7" stroke="#12e412" stroke-width="1.0" fill="none" stroke-linejoin="round" shape-rendering="crispEdges" /><path d="M280.0 310.5 L287.5 311.1 L296.1 314.3 L304.8 311.1 L317.3 311.8 L324.7 313.6 L332.2 316.1 L344.6 316.7 L354.5 318.6 L360.0 319.8 L373.6 316.7 L383.6 314.8 L392.3 311.1 L402.2 306.1 L407.2 303.7 L423.3 302.4 L435.0 301.2 L447.8 301.9 L459.2 306.4 L468.3 305.3" stroke="#12e412" stroke-width="1.0" fill="none" stroke-linejoin="round" shape-rendering="crispEdges" /><path d="M292.4 318.0 L297.4 316.1 L309.8 316.7 L317.3 319.8 L318.5 324.8" stroke="#12e412" stroke-width="1.0" fill="none" stroke-linejoin="round" shape-rendering="crispEdges" /><path d="M323.5 319.8 L329.7 317.4 L342.1 319.8 L339.6 324.8 L332.2 325.4" stroke="#12e412" stroke-width="1.0" fill="none" stroke-linejoin="round" shape-rendering="crispEdges" /><path d="M319.8 326.7 L354.5 326.7" stroke="#12e412" stroke-width="1.0" fill="none" stroke-linejoin="round" shape-rendering="crispEdges" /><path d="M302.4 327.3 L303.6 331.0 L311.1 334.8 L321.0 334.8 L319.8 326.7" stroke="#12e412" stroke-width="1.0" fill="none" stroke-linejoin="round" shape-rendering="crispEdges" /><path d="M280.0 329.8 L302.4 329.8" stroke="#12e412" stroke-width="1.0" fill="none" stroke-linejoin="round" shape-rendering="crispEdges" /><path d="M321.0 334.8 L354.5 332.3" stroke="#12e412" stroke-width="1.0" fill="none" stroke-linejoin="round" shape-rendering="crispEdges" /><path d="M333.4 326.7 L334.7 332.3" stroke="#12e412" stroke-width="1.0" fill="none" stroke-linejoin="round" shape-rendering="crispEdges" /><path d="M287.5 340.3 L359.5 340.3" stroke="#12e412" stroke-width="1.0" fill="none" stroke-linejoin="round" shape-rendering="crispEdges" /><path d="M306.1 348.4 L339.6 347.2 L354.5 348.4" stroke="#12e412" stroke-width="1.0" fill="none" stroke-linejoin="round" shape-rendering="crispEdges" /><path d="M321.0 340.3 L322.2 348.4" stroke="#12e412" stroke-width="1.0" fill="none" stroke-linejoin="round" shape-rendering="crispEdges" /><path d="M287.5 337.2 L288.7 344.7 L294.9 348.4" stroke="#12e412" stroke-width="1.0" fill="none" stroke-linejoin="round" shape-rendering="crispEdges" /><path d="M313.5 337.2 L306.1 344.7 L306.1 348.4" stroke="#12e412" stroke-width="1.0" fill="none" stroke-linejoin="round" shape-rendering="crispEdges" /><path d="M334.7 340.3 L340.9 345.9" stroke="#12e412" stroke-width="1.0" fill="none" stroke-linejoin="round" shape-rendering="crispEdges" /><path d="M281.9 328.5 L287.5 336.0" stroke="#12e412" stroke-width="1.0" fill="none" stroke-linejoin="round" shape-rendering="crispEdges" /><path d="M280.0 350.9 L289.9 350.9 L309.8 349.7 L342.6 349.6 L355.0 350.8" stroke="#12e412" stroke-width="1.0" fill="none" stroke-linejoin="round" shape-rendering="crispEdges" /><path d="M349.6 319.8 L354.5 326.1 L357.0 329.8 L360.0 332.3" stroke="#12e412" stroke-width="1.0" fill="none" stroke-linejoin="round" shape-rendering="crispEdges" /><path d="M352.0 339.7 L359.5 342.2 L357.0 352.1" stroke="#12e412" stroke-width="1.0" fill="none" stroke-linejoin="round" shape-rendering="crispEdges" /><path d="M394.8 312.4 L404.7 311.7 L407.2 314.8 L399.7 318.6 L394.8 316.1" stroke="#12e412" stroke-width="1.0" fill="none" stroke-linejoin="round" shape-rendering="crispEdges" /><path d="M396.0 307.4 L415.9 308.6 L417.1 311.7 L432.0 309.9" stroke="#12e412" stroke-width="1.0" fill="none" stroke-linejoin="round" shape-rendering="crispEdges" /><path d="M415.9 314.8 L423.3 317.3 L429.5 311.7 L435.0 311.1 L441.0 312.1 L425.0 315.6" stroke="#12e412" stroke-width="1.0" fill="none" stroke-linejoin="round" shape-rendering="crispEdges" /><path d="M402.2 323.5 L396.0 322.9 L387.3 324.8 L383.6 329.8 L382.3 334.7 L386.1 337.2 L379.8 339.7 L367.4 342.2 L360.0 348.4" stroke="#12e412" stroke-width="1.0" fill="none" stroke-linejoin="round" shape-rendering="crispEdges" /><path d="M355.0 319.8 L379.8 321.1" stroke="#12e412" stroke-width="1.0" fill="none" stroke-linejoin="round" shape-rendering="crispEdges" /><path d="M355.0 323.5 L386.1 324.8" stroke="#12e412" stroke-width="1.0" fill="none" stroke-linejoin="round" shape-rendering="crispEdges" /><path d="M355.0 329.8 L379.8 328.5" stroke="#12e412" stroke-width="1.0" fill="none" stroke-linejoin="round" shape-rendering="crispEdges" /><path d="M361.2 331.0 L377.4 329.8" stroke="#12e412" stroke-width="1.0" fill="none" stroke-linejoin="round" shape-rendering="crispEdges" /><path d="M355.0 335.3 L377.4 335.3" stroke="#12e412" stroke-width="1.0" fill="none" stroke-linejoin="round" shape-rendering="crispEdges" /><path d="M355.0 340.3 L371.1 339.7" stroke="#12e412" stroke-width="1.0" fill="none" stroke-linejoin="round" shape-rendering="crispEdges" /><path d="M383.6 313.6 L384.8 322.3" stroke="#12e412" stroke-width="1.0" fill="none" stroke-linejoin="round" shape-rendering="crispEdges" /><path d="M386.1 322.3 L388.5 318.6 L393.5 316.7" stroke="#12e412" stroke-width="1.0" fill="none" stroke-linejoin="round" shape-rendering="crispEdges" /><path d="M378.6 309.3 L384.8 309.9" stroke="#12e412" stroke-width="1.0" fill="none" stroke-linejoin="round" shape-rendering="crispEdges" /><path d="M289.6 350.2 L281.8 351.9 L276.1 355.3 L275.0 362.0 L279.5 366.5 L286.3 369.9 L297.5 371.6 L313.3 371.1 L318.9 368.8 L321.2 366.0 L338.1 365.4 L340.4 367.7 L337.0 369.9 L333.6 373.3 L332.5 376.1" stroke="#12e412" stroke-width="1.0" fill="none" stroke-linejoin="round" shape-rendering="crispEdges" /><path d="M385.6 336.3 L378.0 338.9 L370.3 341.4 L361.5 345.2 L357.7 347.7 L355.1 351.5 L360.2 354.7 L367.8 357.9 L371.6 356.6 L370.3 354.1 L361.5 347.7" stroke="#12e412" stroke-width="1.0" fill="none" stroke-linejoin="round" shape-rendering="crispEdges" /><path d="M345.0 335.1 L378.0 335.1" stroke="#12e412" stroke-width="1.0" fill="none" stroke-linejoin="round" shape-rendering="crispEdges" /><path d="M345.0 339.5 L372.9 339.5" stroke="#12e412" stroke-width="1.0" fill="none" stroke-linejoin="round" shape-rendering="crispEdges" /><path d="M345.0 339.5 L360.2 346.5 L370.3 340.1" stroke="#12e412" stroke-width="1.0" fill="none" stroke-linejoin="round" shape-rendering="crispEdges" /><path d="M378.0 354.1 L386.8 354.7 L388.1 358.5" stroke="#12e412" stroke-width="1.0" fill="none" stroke-linejoin="round" shape-rendering="crispEdges" /><path d="M391.9 356.6 L405.8 360.4" stroke="#12e412" stroke-width="1.0" fill="none" stroke-linejoin="round" shape-rendering="crispEdges" /><path d="M409.6 361.1 L416.0 361.1" stroke="#12e412" stroke-width="1.0" fill="none" stroke-linejoin="round" shape-rendering="crispEdges" /><path d="M417.2 362.3 L428.7 363.0" stroke="#12e412" stroke-width="1.0" fill="none" stroke-linejoin="round" shape-rendering="crispEdges" /><path d="M350.1 364.9 L357.7 363.0 L376.7 362.3 L395.7 364.2 L413.4 366.1 L395.7 365.5 L364.0 364.9 L350.1 364.9" stroke="#12e412" stroke-width="1.0" fill="none" stroke-linejoin="round" shape-rendering="crispEdges" /><path d="M414.7 368.0 L435.0 369.3 L466.0 366.8" stroke="#12e412" stroke-width="1.0" fill="none" stroke-linejoin="round" shape-rendering="crispEdges" /><path d="M419.8 365.5 L433.7 364.9" stroke="#12e412" stroke-width="1.0" fill="none" stroke-linejoin="round" shape-rendering="crispEdges" /><path d="M391.9 370.6 L404.6 370.8" stroke="#12e412" stroke-width="1.0" fill="none" stroke-linejoin="round" shape-rendering="crispEdges" /><path d="M400.0 358.8 L429.6 363.4" stroke="#12e412" stroke-width="1.0" fill="none" stroke-linejoin="round" shape-rendering="crispEdges" /><path d="M232.0 227.3 L237.6 226.2 L246.6 228.4 L253.3 229.5" stroke="#12e412" stroke-width="1.0" fill="none" stroke-linejoin="round" shape-rendering="crispEdges" /><path d="M246.0 223.0 L250.0 222.0 L252.0 225.0 L247.0 225.0" stroke="#12e412" stroke-width="1.0" fill="none" stroke-linejoin="round" shape-rendering="crispEdges" /><path d="M260.0 221.7 L262.3 218.3 L269.1 216.0 L275.9 213.8 L289.4 209.3 L307.4 207.5 L323.2 208.8 L330.0 209.3 L331.6 213.0 L346.0 210.0 L352.3 208.0 L358.5 201.7 L368.8 198.6 L381.3 196.6 L393.7 197.6 L404.0 200.7 L410.5 200.7 L415.7 205.9 L421.9 200.7 L434.3 199.7 L436.4 206.9 L444.7 213.1 L455.0 217.3 L459.2 220.4 L467.5 223.5 L473.7 229.7 L477.8 235.9 L482.0 240.0 L477.8 248.3 L471.6 256.6 L467.5 258.7" stroke="#12e412" stroke-width="1.0" fill="none" stroke-linejoin="round" shape-rendering="crispEdges" /><path d="M269.1 219.4 L282.6 222.8 L300.6 219.4" stroke="#12e412" stroke-width="1.0" fill="none" stroke-linejoin="round" shape-rendering="crispEdges" /><path d="M260.0 221.7 L264.6 227.3" stroke="#12e412" stroke-width="1.0" fill="none" stroke-linejoin="round" shape-rendering="crispEdges" /><path d="M330.0 211.5 L325.4 219.4 L320.9 221.7" stroke="#12e412" stroke-width="1.0" fill="none" stroke-linejoin="round" shape-rendering="crispEdges" /><path d="M395.7 203.8 L406.0 201.7" stroke="#12e412" stroke-width="1.0" fill="none" stroke-linejoin="round" shape-rendering="crispEdges" /><path d="M396.5 251.3 L402.8 253.8 L411.7 255.1" stroke="#12e412" stroke-width="1.0" fill="none" stroke-linejoin="round" shape-rendering="crispEdges" /><path d="M407.9 257.6 L411.7 261.4 L418.0 263.9 L430.7 267.7 L443.4 272.8 L453.5 274.1 L468.7 273.4" stroke="#12e412" stroke-width="1.0" fill="none" stroke-linejoin="round" shape-rendering="crispEdges" /><path d="M466.2 267.7 L470.0 270.3 L480.0 268.0" stroke="#12e412" stroke-width="1.0" fill="none" stroke-linejoin="round" shape-rendering="crispEdges" /><path d="M380.0 263.9 L386.3 265.2 L383.8 268.4" stroke="#12e412" stroke-width="1.0" fill="none" stroke-linejoin="round" shape-rendering="crispEdges" /><path d="M380.0 271.5 L385.1 274.1 L382.5 276.6" stroke="#12e412" stroke-width="1.0" fill="none" stroke-linejoin="round" shape-rendering="crispEdges" /><path d="M380.0 286.8 L390.1 281.7 L405.3 284.9 L411.7 289.3 L430.7 291.8 L445.9 296.9" stroke="#12e412" stroke-width="1.0" fill="none" stroke-linejoin="round" shape-rendering="crispEdges" /><path d="M435.8 299.4 L444.6 296.9" stroke="#12e412" stroke-width="1.0" fill="none" stroke-linejoin="round" shape-rendering="crispEdges" /><path d="M301.3 269.0 L314.0 266.5 L317.8 267.7 L310.2 270.3 L302.6 274.1 L307.7 276.6 L320.3 275.3 L326.7 276.0" stroke="#12e412" stroke-width="1.0" fill="none" stroke-linejoin="round" shape-rendering="crispEdges" /><path d="M331.8 263.3 L338.1 263.3 L338.1 266.5 L333.0 266.5 L331.8 263.3" stroke="#12e412" stroke-width="1.0" fill="none" stroke-linejoin="round" shape-rendering="crispEdges" /><path d="M347.0 264.6 L344.4 269.0 L345.7 270.3" stroke="#12e412" stroke-width="1.0" fill="none" stroke-linejoin="round" shape-rendering="crispEdges" /><path d="M333.0 272.8 L345.7 273.4 L355.8 273.4 L358.4 276.6 L371.0 276.6 L385.0 279.2" stroke="#12e412" stroke-width="1.0" fill="none" stroke-linejoin="round" shape-rendering="crispEdges" /><path d="M367.2 266.5 L377.4 267.7 L373.6 270.3" stroke="#12e412" stroke-width="1.0" fill="none" stroke-linejoin="round" shape-rendering="crispEdges" /><path d="M329.2 279.2 L331.8 281.1" stroke="#12e412" stroke-width="1.0" fill="none" stroke-linejoin="round" shape-rendering="crispEdges" /><path d="M339.4 280.4 L343.2 288.0 L350.8 293.1 L345.7 299.4" stroke="#12e412" stroke-width="1.0" fill="none" stroke-linejoin="round" shape-rendering="crispEdges" /><path d="M295.0 293.7 L307.7 295.0 L330.5 298.8" stroke="#12e412" stroke-width="1.0" fill="none" stroke-linejoin="round" shape-rendering="crispEdges" /><path d="M371.0 281.7 L376.1 285.5 L385.0 286.8" stroke="#12e412" stroke-width="1.0" fill="none" stroke-linejoin="round" shape-rendering="crispEdges" /><path d="M355.8 281.7 L366.0 281.1" stroke="#12e412" stroke-width="1.0" fill="none" stroke-linejoin="round" shape-rendering="crispEdges" /><path d="M340.7 284.1 L351.0 288.3" stroke="#12e412" stroke-width="1.0" fill="none" stroke-linejoin="round" shape-rendering="crispEdges" /><path d="M320.0 379.8 L343.3 380.9 L366.5 378.6 L368.8 385.6 L389.8 390.2 L413.0 389.0 L422.3 383.3 L447.9 380.9 L482.8 382.1" stroke="#12e412" stroke-width="1.0" fill="none" stroke-linejoin="round" shape-rendering="crispEdges" /><path d="M413.0 390.2 L417.7 399.5 L406.0 406.5 L399.0 410.0 L408.4 413.5 L401.4 418.1 L417.7 422.8 L450.2 436.7 L482.8 441.4" stroke="#12e412" stroke-width="1.0" fill="none" stroke-linejoin="round" shape-rendering="crispEdges" /><path d="M258.8 374.6 L303.9 376.9 L319.6 381.4 L340.0 382.5" stroke="#12e412" stroke-width="1.0" fill="none" stroke-linejoin="round" shape-rendering="crispEdges" /><path d="M345.0 376.9 L366.5 378.2" stroke="#12e412" stroke-width="1.0" fill="none" stroke-linejoin="round" shape-rendering="crispEdges" /><path d="M225.0 364.5 L234.0 370.1 L258.8 374.6" stroke="#12e412" stroke-width="1.0" fill="none" stroke-linejoin="round" shape-rendering="crispEdges" /><path d="M353.9 363.2 L349.4 365.4" stroke="#12e412" stroke-width="1.0" fill="none" stroke-linejoin="round" shape-rendering="crispEdges" /><path d="M35.5 170.5 L461.5 170.5" stroke="#c8c8c8" stroke-width="1.0" fill="none" stroke-linejoin="round" shape-rendering="crispEdges" /><path d="M35.5 170.5 L33.5 283.5 L53.5 375.5 L478.5 375.5" stroke="#e0e0e0" stroke-width="1.0" fill="none" stroke-linejoin="round" shape-rendering="crispEdges" /><path d="M35.5 170.5 L55.5 262.5 L54.5 365.0 L53.5 375.5" stroke="#c8c8c8" stroke-width="1.0" fill="none" stroke-linejoin="round" shape-rendering="crispEdges" /><path d="M461.5 170.5 L481.5 262.5 L479.5 375.5" stroke="#d0d0d0" stroke-width="1.0" fill="none" stroke-linejoin="round" shape-rendering="crispEdges" /><path d="M461.5 170.5 L460.5 178.0 L459.5 283.5 L478.5 375.5" stroke="#d8d8d8" stroke-width="1.0" fill="none" stroke-linejoin="round" shape-rendering="crispEdges" /><path d="M55.0 262.5 L481.0 262.5" stroke="#8c8c8c" stroke-width="1.0" fill="none" stroke-linejoin="round" shape-rendering="crispEdges" /><path d="M33.5 283.5 L459.0 283.5" stroke="#8c8c8c" stroke-width="1.0" fill="none" stroke-linejoin="round" shape-rendering="crispEdges" /><clipPath id="bc"><path d="M132.5 250.0 C132.3 247.4 132.0 247.4 134.0 246.0 C136.0 244.6 138.4 244.0 142.4 243.0 C146.4 242.0 149.4 242.1 154.0 241.0 C158.6 239.9 160.4 238.8 165.6 237.5 C170.8 236.2 174.5 235.7 180.0 234.5 C185.5 233.3 188.3 232.6 193.0 231.5 C197.7 230.4 198.9 229.4 203.3 228.8 C207.7 228.2 210.6 228.2 214.9 228.3 C219.2 228.4 219.8 229.1 225.0 229.5 C230.2 229.9 233.4 230.3 240.7 230.4 C248.0 230.5 254.4 230.7 261.4 230.0 C268.4 229.3 269.7 228.2 275.9 227.0 C282.1 225.8 286.3 225.0 292.5 224.0 C298.7 223.0 301.5 222.4 307.0 221.8 C312.5 221.2 314.3 220.7 320.0 221.0 C325.7 221.3 328.4 222.1 335.7 223.5 C343.0 224.9 349.8 226.1 356.4 228.0 C363.0 229.9 364.2 230.7 368.8 233.0 C373.4 235.3 375.9 236.9 379.2 239.5 C382.5 242.1 383.3 243.4 385.4 246.0 C387.5 248.6 389.2 250.5 389.5 252.5 C389.8 254.5 389.5 255.0 387.0 256.0 C384.5 257.0 383.1 256.9 377.0 257.6 C370.9 258.3 364.7 259.1 356.4 259.7 C348.1 260.3 344.0 260.2 335.7 260.7 C327.4 261.2 321.6 261.2 315.0 262.0 C308.4 262.8 306.1 262.3 302.8 264.5 C299.5 266.7 300.8 269.5 298.7 272.8 C296.6 276.1 296.6 279.6 292.5 281.0 C288.4 282.4 283.0 281.2 278.0 280.0 C273.0 278.8 271.3 277.2 267.6 274.9 C263.9 272.6 263.4 269.1 259.3 268.7 C255.2 268.3 252.0 272.8 247.0 272.8 C242.0 272.8 238.2 270.8 234.5 268.7 C230.8 266.6 232.8 264.2 228.3 262.5 C223.8 260.8 218.2 260.6 212.0 260.0 C205.8 259.4 202.7 260.2 197.5 259.6 C192.3 259.0 190.3 258.0 185.9 257.0 C181.5 256.0 179.5 254.5 175.7 254.5 C171.9 254.5 170.2 255.7 167.0 257.0 C163.8 258.3 162.7 259.5 159.8 261.0 C156.9 262.5 156.0 263.9 152.5 264.5 C149.0 265.1 145.9 265.1 142.4 264.0 C138.9 262.9 137.0 261.8 135.0 259.0 C133.0 256.2 132.7 252.6 132.5 250.0Z"/></clipPath><filter id="bl" x="-10%" y="-50%" width="120%" height="200%"><feGaussianBlur stdDeviation="2.2"/></filter><filter id="bl2" x="-10%" y="-50%" width="120%" height="200%"><feGaussianBlur stdDeviation="4"/></filter><path d="M132.5 250.0 C132.3 247.4 132.0 247.4 134.0 246.0 C136.0 244.6 138.4 244.0 142.4 243.0 C146.4 242.0 149.4 242.1 154.0 241.0 C158.6 239.9 160.4 238.8 165.6 237.5 C170.8 236.2 174.5 235.7 180.0 234.5 C185.5 233.3 188.3 232.6 193.0 231.5 C197.7 230.4 198.9 229.4 203.3 228.8 C207.7 228.2 210.6 228.2 214.9 228.3 C219.2 228.4 219.8 229.1 225.0 229.5 C230.2 229.9 233.4 230.3 240.7 230.4 C248.0 230.5 254.4 230.7 261.4 230.0 C268.4 229.3 269.7 228.2 275.9 227.0 C282.1 225.8 286.3 225.0 292.5 224.0 C298.7 223.0 301.5 222.4 307.0 221.8 C312.5 221.2 314.3 220.7 320.0 221.0 C325.7 221.3 328.4 222.1 335.7 223.5 C343.0 224.9 349.8 226.1 356.4 228.0 C363.0 229.9 364.2 230.7 368.8 233.0 C373.4 235.3 375.9 236.9 379.2 239.5 C382.5 242.1 383.3 243.4 385.4 246.0 C387.5 248.6 389.2 250.5 389.5 252.5 C389.8 254.5 389.5 255.0 387.0 256.0 C384.5 257.0 383.1 256.9 377.0 257.6 C370.9 258.3 364.7 259.1 356.4 259.7 C348.1 260.3 344.0 260.2 335.7 260.7 C327.4 261.2 321.6 261.2 315.0 262.0 C308.4 262.8 306.1 262.3 302.8 264.5 C299.5 266.7 300.8 269.5 298.7 272.8 C296.6 276.1 296.6 279.6 292.5 281.0 C288.4 282.4 283.0 281.2 278.0 280.0 C273.0 278.8 271.3 277.2 267.6 274.9 C263.9 272.6 263.4 269.1 259.3 268.7 C255.2 268.3 252.0 272.8 247.0 272.8 C242.0 272.8 238.2 270.8 234.5 268.7 C230.8 266.6 232.8 264.2 228.3 262.5 C223.8 260.8 218.2 260.6 212.0 260.0 C205.8 259.4 202.7 260.2 197.5 259.6 C192.3 259.0 190.3 258.0 185.9 257.0 C181.5 256.0 179.5 254.5 175.7 254.5 C171.9 254.5 170.2 255.7 167.0 257.0 C163.8 258.3 162.7 259.5 159.8 261.0 C156.9 262.5 156.0 263.9 152.5 264.5 C149.0 265.1 145.9 265.1 142.4 264.0 C138.9 262.9 137.0 261.8 135.0 259.0 C133.0 256.2 132.7 252.6 132.5 250.0Z" fill="url(#blob)"/><g clip-path="url(#bc)"><rect x="100" y="200" width="250" height="62" fill="url(#blobL)" mask="url(#maskL)"/><ellipse cx="150" cy="250" rx="14" ry="6" fill="#f0f030" opacity="0.5" filter="url(#bl)"/><path d="M132.5 250.0 C132.3 247.4 132.0 247.4 134.0 246.0 C136.0 244.6 138.4 244.0 142.4 243.0 C146.4 242.0 149.4 242.1 154.0 241.0 C158.6 239.9 160.4 238.8 165.6 237.5 C170.8 236.2 174.5 235.7 180.0 234.5 C185.5 233.3 188.3 232.6 193.0 231.5 C197.7 230.4 198.9 229.4 203.3 228.8 C207.7 228.2 210.6 228.2 214.9 228.3 C219.2 228.4 219.8 229.1 225.0 229.5 C230.2 229.9 233.4 230.3 240.7 230.4 C248.0 230.5 254.4 230.7 261.4 230.0 C268.4 229.3 269.7 228.2 275.9 227.0 C282.1 225.8 286.3 225.0 292.5 224.0 C298.7 223.0 301.5 222.4 307.0 221.8 C312.5 221.2 314.3 220.7 320.0 221.0 C325.7 221.3 328.4 222.1 335.7 223.5 C343.0 224.9 349.8 226.1 356.4 228.0 C363.0 229.9 364.2 230.7 368.8 233.0 C373.4 235.3 375.9 236.9 379.2 239.5 C382.5 242.1 383.3 243.4 385.4 246.0 C387.5 248.6 389.2 250.5 389.5 252.5 C389.8 254.5 389.5 255.0 387.0 256.0 C384.5 257.0 383.1 256.9 377.0 257.6 C370.9 258.3 364.7 259.1 356.4 259.7 C348.1 260.3 344.0 260.2 335.7 260.7 C327.4 261.2 321.6 261.2 315.0 262.0 C308.4 262.8 306.1 262.3 302.8 264.5 C299.5 266.7 300.8 269.5 298.7 272.8 C296.6 276.1 296.6 279.6 292.5 281.0 C288.4 282.4 283.0 281.2 278.0 280.0 C273.0 278.8 271.3 277.2 267.6 274.9 C263.9 272.6 263.4 269.1 259.3 268.7 C255.2 268.3 252.0 272.8 247.0 272.8 C242.0 272.8 238.2 270.8 234.5 268.7 C230.8 266.6 232.8 264.2 228.3 262.5 C223.8 260.8 218.2 260.6 212.0 260.0 C205.8 259.4 202.7 260.2 197.5 259.6 C192.3 259.0 190.3 258.0 185.9 257.0 C181.5 256.0 179.5 254.5 175.7 254.5 C171.9 254.5 170.2 255.7 167.0 257.0 C163.8 258.3 162.7 259.5 159.8 261.0 C156.9 262.5 156.0 263.9 152.5 264.5 C149.0 265.1 145.9 265.1 142.4 264.0 C138.9 262.9 137.0 261.8 135.0 259.0 C133.0 256.2 132.7 252.6 132.5 250.0Z" fill="none" stroke="#604010" stroke-width="5" opacity="0.35" filter="url(#bl)"/><rect x="225" y="262" width="80" height="22" fill="url(#lump)"/><ellipse cx="330" cy="232" rx="40" ry="7" fill="#b85a20" opacity="0.35" filter="url(#bl2)"/><ellipse cx="245" cy="240" rx="18" ry="9" fill="#707018" opacity="0.35" filter="url(#bl2)"/><ellipse cx="335" cy="246" rx="35" ry="4" fill="#fff060" opacity="0.35" filter="url(#bl)"/><ellipse cx="290" cy="258" rx="40" ry="4" fill="#20809a" opacity="0.4" filter="url(#bl)"/></g><path d="M409.5 234.9 C410.3 233.7 412.4 232.9 415.7 232.8 C419.0 232.7 423.1 233.4 426.0 234.2 C428.9 235.0 430.2 235.6 430.2 237.0 C430.2 238.4 428.1 240.0 426.0 241.0 C423.9 242.0 422.7 242.5 419.8 242.1 C416.9 241.7 413.7 240.4 411.6 239.0 C409.5 237.6 408.7 236.1 409.5 234.9Z" fill="#38b0d0"/><path d="M420.9 245.2 C422.1 243.7 425.4 242.5 430.2 242.1 C435.0 241.7 440.6 242.3 444.7 243.1 C448.8 243.9 448.8 244.4 450.9 246.3 C453.0 248.2 455.0 250.2 455.0 252.5 C455.0 254.8 454.6 256.8 450.9 257.6 C447.2 258.4 441.0 257.4 436.4 256.6 C431.8 255.8 430.6 254.9 428.1 253.5 C425.6 252.1 425.4 251.1 424.0 249.4 C422.6 247.7 419.7 246.7 420.9 245.2Z" fill="url(#yb)"/><path d="M455.0 254.5 C455.8 253.1 458.9 253.5 461.0 253.5 C463.1 253.5 466.4 252.6 467.5 254.5 C468.6 256.4 468.5 263.0 467.5 264.9 C466.5 266.8 463.2 266.4 461.3 265.9 C459.4 265.4 457.1 263.7 456.0 261.8 C454.9 259.9 454.2 255.9 455.0 254.5Z" fill="#48c0c8"/><path d="M132.0 262.5 L389.0 262.5" stroke="#b8e0e0" stroke-width="1.0" fill="none" stroke-linejoin="round" shape-rendering="crispEdges" opacity="0.75"/><path d="M455.0 262.5 L468.0 262.5" stroke="#b8e0e0" stroke-width="1.0" fill="none" stroke-linejoin="round" shape-rendering="crispEdges" opacity="0.75"/><text x="65.5" y="424.6" font-family="Liberation Mono" font-size="10.5" fill="#28ecf0" textLength="378" lengthAdjust="spacing">PRECIP - Color-Filled Contour Plan View 1998-06-29 12:00:00Z</text><text x="122.6" y="434" font-family="Liberation Mono" font-size="10.5" fill="#ff2020" textLength="264.6" lengthAdjust="spacing">Z - Contour Plan View 1998-06-29 12:00:00Z</text><text x="28" y="443.6" font-family="Liberation Mono" font-size="10.5" fill="#f020f0" textLength="453.6" lengthAdjust="spacing">windspeed - Isosurface colored by another parameter 1998-06-29 12:00:00Z</text></svg>
<div class="a" style="left:488px;top:64px;width:1px;height:391px;background:#fbfbfa"></div>
<svg class="a" style="left:488px;top:64px;" width="6" height="391" viewBox="0 0 6 391"><rect x="2" y="0" width="1" height="1" fill="#707a8e"/><rect x="4" y="2" width="1" height="1" fill="#707a8e"/><rect x="2" y="3" width="1" height="1" fill="#707a8e"/><rect x="4" y="5" width="1" height="1" fill="#707a8e"/><rect x="2" y="6" width="1" height="1" fill="#707a8e"/><rect x="4" y="8" width="1" height="1" fill="#707a8e"/><rect x="2" y="9" width="1" height="1" fill="#707a8e"/><rect x="4" y="11" width="1" height="1" fill="#707a8e"/><rect x="2" y="12" width="1" height="1" fill="#707a8e"/><rect x="4" y="14" width="1" height="1" fill="#707a8e"/><rect x="2" y="15" width="1" height="1" fill="#707a8e"/><rect x="4" y="17" width="1" height="1" fill="#707a8e"/><rect x="2" y="18" width="1" height="1" fill="#707a8e"/><rect x="4" y="20" width="1" height="1" fill="#707a8e"/><rect x="2" y="21" width="1" height="1" fill="#707a8e"/><rect x="4" y="23" width="1" height="1" fill="#707a8e"/><rect x="2" y="24" width="1" height="1" fill="#707a8e"/><rect x="4" y="26" width="1" height="1" fill="#707a8e"/><rect x="2" y="27" width="1" height="1" fill="#707a8e"/><rect x="4" y="29" width="1" height="1" fill="#707a8e"/><rect x="2" y="30" width="1" height="1" fill="#707a8e"/><rect x="4" y="32" width="1" height="1" fill="#707a8e"/><rect x="2" y="33" width="1" height="1" fill="#707a8e"/><rect x="4" y="35" width="1" height="1" fill="#707a8e"/><rect x="2" y="36" width="1" height="1" fill="#707a8e"/><rect x="4" y="38" width="1" height="1" fill="#707a8e"/><rect x="2" y="39" width="1" height="1" fill="#707a8e"/><rect x="4" y="41" width="1" height="1" fill="#707a8e"/><rect x="2" y="42" width="1" height="1" fill="#707a8e"/><rect x="4" y="44" width="1" height="1" fill="#707a8e"/><rect x="2" y="45" width="1" height="1" fill="#707a8e"/><rect x="4" y="47" width="1" height="1" fill="#707a8e"/><rect x="2" y="48" width="1" height="1" fill="#707a8e"/><rect x="4" y="50" width="1" height="1" fill="#707a8e"/><rect x="2" y="51" width="1" height="1" fill="#707a8e"/><rect x="4" y="53" width="1" height="1" fill="#707a8e"/><rect x="2" y="54" width="1" height="1" fill="#707a8e"/><rect x="4" y="56" width="1" height="1" fill="#707a8e"/><rect x="2" y="57" width="1" height="1" fill="#707a8e"/><rect x="4" y="59" width="1" height="1" fill="#707a8e"/><rect x="2" y="60" width="1" height="1" fill="#707a8e"/><rect x="4" y="62" width="1" height="1" fill="#707a8e"/><rect x="2" y="63" width="1" height="1" fill="#707a8e"/><rect x="4" y="65" width="1" height="1" fill="#707a8e"/><rect x="2" y="66" width="1" height="1" fill="#707a8e"/><rect x="4" y="68" width="1" height="1" fill="#707a8e"/><rect x="2" y="69" width="1" height="1" fill="#707a8e"/><rect x="4" y="71" width="1" height="1" fill="#707a8e"/><rect x="2" y="72" width="1" height="1" fill="#707a8e"/><rect x="4" y="74" width="1" height="1" fill="#707a8e"/><rect x="2" y="75" width="1" height="1" fill="#707a8e"/><rect x="4" y="77" width="1" height="1" fill="#707a8e"/><rect x="2" y="78" width="1" height="1" fill="#707a8e"/><rect x="4" y="80" width="1" height="1" fill="#707a8e"/><rect x="2" y="81" width="1" height="1" fill="#707a8e"/><rect x="4" y="83" width="1" height="1" fill="#707a8e"/><rect x="2" y="84" width="1" height="1" fill="#707a8e"/><rect x="4" y="86" width="1" height="1" fill="#707a8e"/><rect x="2" y="87" width="1" height="1" fill="#707a8e"/><rect x="4" y="89" width="1" height="1" fill="#707a8e"/><rect x="2" y="90" width="1" height="1" fill="#707a8e"/><rect x="4" y="92" width="1" height="1" fill="#707a8e"/><rect x="2" y="93" width="1" height="1" fill="#707a8e"/><rect x="4" y="95" width="1" height="1" fill="#707a8e"/><rect x="2" y="96" width="1" height="1" fill="#707a8e"/><rect x="4" y="98" width="1" height="1" fill="#707a8e"/><rect x="2" y="99" width="1" height="1" fill="#707a8e"/><rect x="4" y="101" width="1" height="1" fill="#707a8e"/><rect x="2" y="102" width="1" height="1" fill="#707a8e"/><rect x="4" y="104" width="1" height="1" fill="#707a8e"/><rect x="2" y="105" width="1" height="1" fill="#707a8e"/><rect x="4" y="107" width="1" height="1" fill="#707a8e"/><rect x="2" y="108" width="1" height="1" fill="#707a8e"/><rect x="4" y="110" width="1" height="1" fill="#707a8e"/><rect x="2" y="111" width="1" height="1" fill="#707a8e"/><rect x="4" y="113" width="1" height="1" fill="#707a8e"/><rect x="2" y="114" width="1" height="1" fill="#707a8e"/><rect x="4" y="116" width="1" height="1" fill="#707a8e"/><rect x="2" y="117" width="1" height="1" fill="#707a8e"/><rect x="4" y="119" width="1" height="1" fill="#707a8e"/><rect x="2" y="120" width="1" height="1" fill="#707a8e"/><rect x="4" y="122" width="1" height="1" fill="#707a8e"/><rect x="2" y="123" width="1" height="1" fill="#707a8e"/><rect x="4" y="125" width="1" height="1" fill="#707a8e"/><rect x="2" y="126" width="1" height="1" fill="#707a8e"/><rect x="4" y="128" width="1" height="1" fill="#707a8e"/><rect x="2" y="129" width="1" height="1" fill="#707a8e"/><rect x="4" y="131" width="1" height="1" fill="#707a8e"/><rect x="2" y="132" width="1" height="1" fill="#707a8e"/><rect x="4" y="134" width="1" height="1" fill="#707a8e"/><rect x="2" y="135" width="1" height="1" fill="#707a8e"/><rect x="4" y="137" width="1" height="1" fill="#707a8e"/><rect x="2" y="138" width="1" height="1" fill="#707a8e"/><rect x="4" y="140" width="1" height="1" fill="#707a8e"/><rect x="2" y="141" width="1" height="1" fill="#707a8e"/><rect x="4" y="143" width="1" height="1" fill="#707a8e"/><rect x="2" y="144" width="1" height="1" fill="#707a8e"/><rect x="4" y="146" width="1" height="1" fill="#707a8e"/><rect x="2" y="147" width="1" height="1" fill="#707a8e"/><rect x="4" y="149" width="1" height="1" fill="#707a8e"/><rect x="2" y="150" width="1" height="1" fill="#707a8e"/><rect x="4" y="152" width="1" height="1" fill="#707a8e"/><rect x="2" y="153" width="1" height="1" fill="#707a8e"/><rect x="4" y="155" width="1" height="1" fill="#707a8e"/><rect x="2" y="156" width="1" height="1" fill="#707a8e"/><rect x="4" y="158" width="1" height="1" fill="#707a8e"/><rect x="2" y="159" width="1" height="1" fill="#707a8e"/><rect x="4" y="161" width="1" height="1" fill="#707a8e"/><rect x="2" y="162" width="1" height="1" fill="#707a8e"/><rect x="4" y="164" width="1" height="1" fill="#707a8e"/><rect x="2" y="165" width="1" height="1" fill="#707a8e"/><rect x="4" y="167" width="1" height="1" fill="#707a8e"/><rect x="2" y="168" width="1" height="1" fill="#707a8e"/><rect x="4" y="170" width="1" height="1" fill="#707a8e"/><rect x="2" y="171" width="1" height="1" fill="#707a8e"/><rect x="4" y="173" width="1" height="1" fill="#707a8e"/><rect x="2" y="174" width="1" height="1" fill="#707a8e"/><rect x="4" y="176" width="1" height="1" fill="#707a8e"/><rect x="2" y="177" width="1" height="1" fill="#707a8e"/><rect x="4" y="179" width="1" height="1" fill="#707a8e"/><rect x="2" y="180" width="1" height="1" fill="#707a8e"/><rect x="4" y="182" width="1" height="1" fill="#707a8e"/><rect x="2" y="183" width="1" height="1" fill="#707a8e"/><rect x="4" y="185" width="1" height="1" fill="#707a8e"/><rect x="2" y="186" width="1" height="1" fill="#707a8e"/><rect x="4" y="188" width="1" height="1" fill="#707a8e"/><rect x="2" y="189" width="1" height="1" fill="#707a8e"/><rect x="4" y="191" width="1" height="1" fill="#707a8e"/><rect x="2" y="192" width="1" height="1" fill="#707a8e"/><rect x="4" y="194" width="1" height="1" fill="#707a8e"/><rect x="2" y="195" width="1" height="1" fill="#707a8e"/><rect x="4" y="197" width="1" height="1" fill="#707a8e"/><rect x="2" y="198" width="1" height="1" fill="#707a8e"/><rect x="4" y="200" width="1" height="1" fill="#707a8e"/><rect x="2" y="201" width="1" height="1" fill="#707a8e"/><rect x="4" y="203" width="1" height="1" fill="#707a8e"/><rect x="2" y="204" width="1" height="1" fill="#707a8e"/><rect x="4" y="206" width="1" height="1" fill="#707a8e"/><rect x="2" y="207" width="1" height="1" fill="#707a8e"/><rect x="4" y="209" width="1" height="1" fill="#707a8e"/><rect x="2" y="210" width="1" height="1" fill="#707a8e"/><rect x="4" y="212" width="1" height="1" fill="#707a8e"/><rect x="2" y="213" width="1" height="1" fill="#707a8e"/><rect x="4" y="215" width="1" height="1" fill="#707a8e"/><rect x="2" y="216" width="1" height="1" fill="#707a8e"/><rect x="4" y="218" width="1" height="1" fill="#707a8e"/><rect x="2" y="219" width="1" height="1" fill="#707a8e"/><rect x="4" y="221" width="1" height="1" fill="#707a8e"/><rect x="2" y="222" width="1" height="1" fill="#707a8e"/><rect x="4" y="224" width="1" height="1" fill="#707a8e"/><rect x="2" y="225" width="1" height="1" fill="#707a8e"/><rect x="4" y="227" width="1" height="1" fill="#707a8e"/><rect x="2" y="228" width="1" height="1" fill="#707a8e"/><rect x="4" y="230" width="1" height="1" fill="#707a8e"/><rect x="2" y="231" width="1" height="1" fill="#707a8e"/><rect x="4" y="233" width="1" height="1" fill="#707a8e"/><rect x="2" y="234" width="1" height="1" fill="#707a8e"/><rect x="4" y="236" width="1" height="1" fill="#707a8e"/><rect x="2" y="237" width="1" height="1" fill="#707a8e"/><rect x="4" y="239" width="1" height="1" fill="#707a8e"/><rect x="2" y="240" width="1" height="1" fill="#707a8e"/><rect x="4" y="242" width="1" height="1" fill="#707a8e"/><rect x="2" y="243" width="1" height="1" fill="#707a8e"/><rect x="4" y="245" width="1" height="1" fill="#707a8e"/><rect x="2" y="246" width="1" height="1" fill="#707a8e"/><rect x="4" y="248" width="1" height="1" fill="#707a8e"/><rect x="2" y="249" width="1" height="1" fill="#707a8e"/><rect x="4" y="251" width="1" height="1" fill="#707a8e"/><rect x="2" y="252" width="1" height="1" fill="#707a8e"/><rect x="4" y="254" width="1" height="1" fill="#707a8e"/><rect x="2" y="255" width="1" height="1" fill="#707a8e"/><rect x="4" y="257" width="1" height="1" fill="#707a8e"/><rect x="2" y="258" width="1" height="1" fill="#707a8e"/><rect x="4" y="260" width="1" height="1" fill="#707a8e"/><rect x="2" y="261" width="1" height="1" fill="#707a8e"/><rect x="4" y="263" width="1" height="1" fill="#707a8e"/><rect x="2" y="264" width="1" height="1" fill="#707a8e"/><rect x="4" y="266" width="1" height="1" fill="#707a8e"/><rect x="2" y="267" width="1" height="1" fill="#707a8e"/><rect x="4" y="269" width="1" height="1" fill="#707a8e"/><rect x="2" y="270" width="1" height="1" fill="#707a8e"/><rect x="4" y="272" width="1" height="1" fill="#707a8e"/><rect x="2" y="273" width="1" height="1" fill="#707a8e"/><rect x="4" y="275" width="1" height="1" fill="#707a8e"/><rect x="2" y="276" width="1" height="1" fill="#707a8e"/><rect x="4" y="278" width="1" height="1" fill="#707a8e"/><rect x="2" y="279" width="1" height="1" fill="#707a8e"/><rect x="4" y="281" width="1" height="1" fill="#707a8e"/><rect x="2" y="282" width="1" height="1" fill="#707a8e"/><rect x="4" y="284" width="1" height="1" fill="#707a8e"/><rect x="2" y="285" width="1" height="1" fill="#707a8e"/><rect x="4" y="287" width="1" height="1" fill="#707a8e"/><rect x="2" y="288" width="1" height="1" fill="#707a8e"/><rect x="4" y="290" width="1" height="1" fill="#707a8e"/><rect x="2" y="291" width="1" height="1" fill="#707a8e"/><rect x="4" y="293" width="1" height="1" fill="#707a8e"/><rect x="2" y="294" width="1" height="1" fill="#707a8e"/><rect x="4" y="296" width="1" height="1" fill="#707a8e"/><rect x="2" y="297" width="1" height="1" fill="#707a8e"/><rect x="4" y="299" width="1" height="1" fill="#707a8e"/><rect x="2" y="300" width="1" height="1" fill="#707a8e"/><rect x="4" y="302" width="1" height="1" fill="#707a8e"/><rect x="2" y="303" width="1" height="1" fill="#707a8e"/><rect x="4" y="305" width="1" height="1" fill="#707a8e"/><rect x="2" y="306" width="1" height="1" fill="#707a8e"/><rect x="4" y="308" width="1" height="1" fill="#707a8e"/><rect x="2" y="309" width="1" height="1" fill="#707a8e"/><rect x="4" y="311" width="1" height="1" fill="#707a8e"/><rect x="2" y="312" width="1" height="1" fill="#707a8e"/><rect x="4" y="314" width="1" height="1" fill="#707a8e"/><rect x="2" y="315" width="1" height="1" fill="#707a8e"/><rect x="4" y="317" width="1" height="1" fill="#707a8e"/><rect x="2" y="318" width="1" height="1" fill="#707a8e"/><rect x="4" y="320" width="1" height="1" fill="#707a8e"/><rect x="2" y="321" width="1" height="1" fill="#707a8e"/><rect x="4" y="323" width="1" height="1" fill="#707a8e"/><rect x="2" y="324" width="1" height="1" fill="#707a8e"/><rect x="4" y="326" width="1" height="1" fill="#707a8e"/><rect x="2" y="327" width="1" height="1" fill="#707a8e"/><rect x="4" y="329" width="1" height="1" fill="#707a8e"/><rect x="2" y="330" width="1" height="1" fill="#707a8e"/><rect x="4" y="332" width="1" height="1" fill="#707a8e"/><rect x="2" y="333" width="1" height="1" fill="#707a8e"/><rect x="4" y="335" width="1" height="1" fill="#707a8e"/><rect x="2" y="336" width="1" height="1" fill="#707a8e"/><rect x="4" y="338" width="1" height="1" fill="#707a8e"/><rect x="2" y="339" width="1" height="1" fill="#707a8e"/><rect x="4" y="341" width="1" height="1" fill="#707a8e"/><rect x="2" y="342" width="1" height="1" fill="#707a8e"/><rect x="4" y="344" width="1" height="1" fill="#707a8e"/><rect x="2" y="345" width="1" height="1" fill="#707a8e"/><rect x="4" y="347" width="1" height="1" fill="#707a8e"/><rect x="2" y="348" width="1" height="1" fill="#707a8e"/><rect x="4" y="350" width="1" height="1" fill="#707a8e"/><rect x="2" y="351" width="1" height="1" fill="#707a8e"/><rect x="4" y="353" width="1" height="1" fill="#707a8e"/><rect x="2" y="354" width="1" height="1" fill="#707a8e"/><rect x="4" y="356" width="1" height="1" fill="#707a8e"/><rect x="2" y="357" width="1" height="1" fill="#707a8e"/><rect x="4" y="359" width="1" height="1" fill="#707a8e"/><rect x="2" y="360" width="1" height="1" fill="#707a8e"/><rect x="4" y="362" width="1" height="1" fill="#707a8e"/><rect x="2" y="363" width="1" height="1" fill="#707a8e"/><rect x="4" y="365" width="1" height="1" fill="#707a8e"/><rect x="2" y="366" width="1" height="1" fill="#707a8e"/><rect x="4" y="368" width="1" height="1" fill="#707a8e"/><rect x="2" y="369" width="1" height="1" fill="#707a8e"/><rect x="4" y="371" width="1" height="1" fill="#707a8e"/><rect x="2" y="372" width="1" height="1" fill="#707a8e"/><rect x="4" y="374" width="1" height="1" fill="#707a8e"/><rect x="2" y="375" width="1" height="1" fill="#707a8e"/><rect x="4" y="377" width="1" height="1" fill="#707a8e"/><rect x="2" y="378" width="1" height="1" fill="#707a8e"/><rect x="4" y="380" width="1" height="1" fill="#707a8e"/><rect x="2" y="381" width="1" height="1" fill="#707a8e"/><rect x="4" y="383" width="1" height="1" fill="#707a8e"/><rect x="2" y="384" width="1" height="1" fill="#707a8e"/><rect x="4" y="386" width="1" height="1" fill="#707a8e"/><rect x="2" y="387" width="1" height="1" fill="#707a8e"/><rect x="4" y="389" width="1" height="1" fill="#707a8e"/><rect x="2" y="390" width="1" height="1" fill="#707a8e"/><rect x="4" y="392" width="1" height="1" fill="#707a8e"/></svg>
<div class="a" style="left:494px;top:64px;width:2px;height:391px;background:#7a8aa2"></div>
<svg class="a" style="left:488px;top:64px;" width="6" height="22" viewBox="0 0 6 22"><rect x="0" y="0" width="6" height="21" fill="#ededea"/><path d="M4.5 3v7L0.5 6.5z" fill="#4a68b8"/><path d="M0.5 13v7l4-3.5z" fill="#4a68b8"/></svg>
<div class="a" style="left:496px;top:64px;width:205px;height:391px;background:#ecede8"></div>
<div class="a" style="left:496px;top:64px;width:205px;height:1px;background:#a8b4c8"></div>
<div class="a" style="left:496px;top:65px;width:204px;height:1px;background:#f8f8f8"></div>
<div class="a" style="left:700px;top:64px;width:1px;height:391px;background:#9aa0a8"></div>
<div class="a" style="left:701px;top:64px;width:1px;height:391px;background:#fafafa"></div>
<div class="a" style="left:496px;top:454px;width:205px;height:1px;background:#a8b0c0"></div>
<svg class="a" style="left:686px;top:67px;" width="14" height="13" viewBox="0 0 14 13"><rect x="0.5" y="0.5" width="12" height="10" fill="#fff" stroke="#5080d0"/><rect x="0.5" y="0.5" width="12" height="2.5" fill="#90b8ec" stroke="#5080d0"/><path d="M10 6v-2l3 3h-2v3h-2v-3h-2z" fill="#40a040"/></svg>
<div class="a" style="left:497px;top:82px;width:203px;height:1px;background:#111"></div>
<svg class="a" style="left:499px;top:86px;" width="9" height="9" viewBox="0 0 9 9"><rect x="0.5" y="0.5" width="7.5" height="7.5" rx="1.2" fill="#f6eec4" stroke="#101010" stroke-width="1"/><rect x="2" y="4" width="4.5" height="1.2" fill="#505050"/></svg>
<svg class="a" style="left:510px;top:85px;" width="11" height="11" viewBox="0 0 11 11"><defs><linearGradient id="cb" x1="0" y1="0" x2="0" y2="1"><stop offset="0" stop-color="#f4f8ff"/><stop offset="1" stop-color="#c4d8f0"/></linearGradient></defs><rect x="0.5" y="0.5" width="10" height="10" fill="url(#cb)" stroke="#8aa2c0"/><path d="M2.8 5.8l1.6 2.2 3.8-4.8" stroke="#111" stroke-width="1.5" fill="none"/></svg>
<div class="a" style="left:497px;top:96px;width:203px;height:1px;background:#333"></div>
<svg class="a" style="left:502px;top:104px;" width="9" height="9" viewBox="0 0 9 9"><rect x="0.5" y="0.5" width="7.5" height="7.5" rx="1.2" fill="#f6eec4" stroke="#101010" stroke-width="1"/><rect x="2" y="4" width="4.5" height="1.2" fill="#505050"/></svg>
<svg class="a" style="left:513px;top:102px;" width="11" height="11" viewBox="0 0 11 11"><defs><linearGradient id="cb" x1="0" y1="0" x2="0" y2="1"><stop offset="0" stop-color="#f4f8ff"/><stop offset="1" stop-color="#c4d8f0"/></linearGradient></defs><rect x="0.5" y="0.5" width="10" height="10" fill="url(#cb)" stroke="#8aa2c0"/><path d="M2.8 5.8l1.6 2.2 3.8-4.8" stroke="#111" stroke-width="1.5" fill="none"/></svg>
<div class="a" style="left:528px;top:111px;width:136px;height:1px;background:#1060f0"></div>
<svg class="a" style="left:670px;top:100px;" width="13" height="14" viewBox="0 0 13 14"><path d="M3 6.5v-2.5a3.3 3.3 0 0 1 6.6 0v2.5" stroke="#a0a0a0" stroke-width="1.4" fill="none"/><rect x="0.8" y="6" width="11.4" height="7.2" rx="1" fill="#f0c048" stroke="#c89028" stroke-width="0.8"/><rect x="3" y="8.5" width="7" height="2.5" fill="#f8e090"/></svg>
<svg class="a" style="left:688px;top:101px;" width="10" height="12" viewBox="0 0 10 12"><rect x="1" y="1.5" width="8" height="10" rx="1.5" fill="#f4f4f4" stroke="#808080" stroke-width="0.9"/><ellipse cx="5" cy="2.2" rx="4" ry="1.5" fill="#e0e0e0" stroke="#808080" stroke-width="0.8"/><path d="M3.5 4v6M6.5 4v6" stroke="#b0b0b0" stroke-width="0.8"/></svg>
<div class="a" style="left:497px;top:141px;width:203px;height:1px;background:#777"></div>
<svg class="a" style="left:499px;top:146px;" width="9" height="9" viewBox="0 0 9 9"><rect x="0.5" y="0.5" width="7.5" height="7.5" rx="1.2" fill="#f6eec4" stroke="#101010" stroke-width="1"/><rect x="2" y="4" width="4.5" height="1.2" fill="#505050"/></svg>
<svg class="a" style="left:510px;top:144px;" width="11" height="11" viewBox="0 0 11 11"><defs><linearGradient id="cb" x1="0" y1="0" x2="0" y2="1"><stop offset="0" stop-color="#f4f8ff"/><stop offset="1" stop-color="#c4d8f0"/></linearGradient></defs><rect x="0.5" y="0.5" width="10" height="10" fill="url(#cb)" stroke="#8aa2c0"/><path d="M2.8 5.8l1.6 2.2 3.8-4.8" stroke="#111" stroke-width="1.5" fill="none"/></svg>
<div class="a" style="left:497px;top:156px;width:203px;height:1px;background:#222"></div>
<svg class="a" style="left:502px;top:163px;" width="9" height="9" viewBox="0 0 9 9"><rect x="0.5" y="0.5" width="7.5" height="7.5" rx="1.2" fill="#f6eec4" stroke="#101010" stroke-width="1"/><rect x="2" y="4" width="4.5" height="1.2" fill="#505050"/></svg>
<svg class="a" style="left:513px;top:161px;" width="11" height="11" viewBox="0 0 11 11"><defs><linearGradient id="cb" x1="0" y1="0" x2="0" y2="1"><stop offset="0" stop-color="#f4f8ff"/><stop offset="1" stop-color="#c4d8f0"/></linearGradient></defs><rect x="0.5" y="0.5" width="10" height="10" fill="url(#cb)" stroke="#8aa2c0"/><path d="M2.8 5.8l1.6 2.2 3.8-4.8" stroke="#111" stroke-width="1.5" fill="none"/></svg>
<div class="a" style="left:528px;top:171px;width:141px;height:1px;background:#1060f0"></div>
<svg class="a" style="left:670px;top:160px;" width="13" height="14" viewBox="0 0 13 14"><path d="M3 6v-2.5a2.5 2.5 0 0 1 5 0v1" stroke="#909090" stroke-width="1.4" fill="none"/><rect x="0.8" y="6" width="11.4" height="7.2" rx="1" fill="#f0c048" stroke="#c89028" stroke-width="0.8"/><rect x="3" y="8.5" width="7" height="2.5" fill="#f8e090"/></svg>
<svg class="a" style="left:688px;top:161px;" width="10" height="12" viewBox="0 0 10 12"><rect x="1" y="1.5" width="8" height="10" rx="1.5" fill="#f4f4f4" stroke="#808080" stroke-width="0.9"/><ellipse cx="5" cy="2.2" rx="4" ry="1.5" fill="#e0e0e0" stroke="#808080" stroke-width="0.8"/><path d="M3.5 4v6M6.5 4v6" stroke="#b0b0b0" stroke-width="0.8"/></svg>
<div class="a" style="left:503px;top:176px;width:147px;height:13px;background:linear-gradient(90deg,#0010f0 0.00% 4.46%,#0838ff 4.46% 8.17%,#3070ff 8.17% 10.40%,#60a0ff 10.40% 12.63%,#3080ff 12.63% 14.12%,#50b0ff 14.12% 15.60%,#40d0ff 15.60% 18.57%,#80f8e0 18.57% 24.52%,#80e8c0 24.52% 28.97%,#90e8a0 28.97% 34.92%,#a0d870 34.92% 42.35%,#a8c840 42.35% 48.29%,#a8b020 48.29% 54.23%,#c0b810 54.23% 60.18%,#c8b010 60.18% 66.86%,#d8a010 66.86% 72.07%,#e09818 72.07% 78.75%,#f09010 78.75% 85.44%,#f07c08 85.44% 91.38%,#ff6a00 91.38% 100.00%)"></div>
<div class="a" style="left:497px;top:203px;width:203px;height:1px;background:#888"></div>
<svg class="a" style="left:502px;top:209px;" width="9" height="9" viewBox="0 0 9 9"><rect x="0.5" y="0.5" width="7.5" height="7.5" rx="1.2" fill="#f6eec4" stroke="#101010" stroke-width="1"/><rect x="2" y="4" width="4.5" height="1.2" fill="#505050"/></svg>
<svg class="a" style="left:513px;top:207px;" width="11" height="11" viewBox="0 0 11 11"><defs><linearGradient id="cb" x1="0" y1="0" x2="0" y2="1"><stop offset="0" stop-color="#f4f8ff"/><stop offset="1" stop-color="#c4d8f0"/></linearGradient></defs><rect x="0.5" y="0.5" width="10" height="10" fill="url(#cb)" stroke="#8aa2c0"/><path d="M2.8 5.8l1.6 2.2 3.8-4.8" stroke="#111" stroke-width="1.5" fill="none"/></svg>
<div class="a" style="left:528px;top:217px;width:118px;height:1px;background:#1060f0"></div>
<svg class="a" style="left:670px;top:206px;" width="13" height="14" viewBox="0 0 13 14"><path d="M3 6v-2.5a2.5 2.5 0 0 1 5 0v1" stroke="#909090" stroke-width="1.4" fill="none"/><rect x="0.8" y="6" width="11.4" height="7.2" rx="1" fill="#f0c048" stroke="#c89028" stroke-width="0.8"/><rect x="3" y="8.5" width="7" height="2.5" fill="#f8e090"/></svg>
<svg class="a" style="left:688px;top:207px;" width="10" height="12" viewBox="0 0 10 12"><rect x="1" y="1.5" width="8" height="10" rx="1.5" fill="#f4f4f4" stroke="#808080" stroke-width="0.9"/><ellipse cx="5" cy="2.2" rx="4" ry="1.5" fill="#e0e0e0" stroke="#808080" stroke-width="0.8"/><path d="M3.5 4v6M6.5 4v6" stroke="#b0b0b0" stroke-width="0.8"/></svg>
<div class="a" style="left:503px;top:232px;width:147px;height:13px;background:linear-gradient(90deg,#0000ff 0.00% 6.72%,#0a28ff 6.72% 14.18%,#1040ff 14.18% 22.39%,#1850ff 22.39% 28.36%,#3068ff 28.36% 35.82%,#2080ff 35.82% 40.30%,#1890f8 40.30% 43.28%,#10a8ff 43.28% 47.76%,#38c0ff 47.76% 56.72%,#30d0ff 56.72% 58.96%,#00e8ff 58.96% 64.93%,#60f0f0 64.93% 66.42%,#20d0a0 66.42% 67.91%,#00e000 67.91% 72.39%,#80f000 72.39% 76.12%,#f0f000 76.12% 79.10%,#f0d020 79.10% 82.84%,#f8b000 82.84% 86.57%,#f88000 86.57% 91.04%,#f06000 91.04% 94.03%,#ff3000 94.03% 100.00%)"></div>
<div class="a" style="left:497px;top:260px;width:203px;height:2px;background:#222"></div>
<svg class="a" style="left:499px;top:265px;" width="9" height="9" viewBox="0 0 9 9"><rect x="0.5" y="0.5" width="7.5" height="7.5" rx="1.2" fill="#f6eec4" stroke="#101010" stroke-width="1"/><rect x="2" y="4" width="4.5" height="1.2" fill="#505050"/></svg>
<svg class="a" style="left:510px;top:262px;" width="11" height="11" viewBox="0 0 11 11"><defs><linearGradient id="cb" x1="0" y1="0" x2="0" y2="1"><stop offset="0" stop-color="#f4f8ff"/><stop offset="1" stop-color="#c4d8f0"/></linearGradient></defs><rect x="0.5" y="0.5" width="10" height="10" fill="url(#cb)" stroke="#8aa2c0"/><path d="M2.8 5.8l1.6 2.2 3.8-4.8" stroke="#111" stroke-width="1.5" fill="none"/></svg>
<div class="a" style="left:497px;top:274px;width:203px;height:1px;background:#222"></div>
<svg class="a" style="left:502px;top:282px;" width="9" height="9" viewBox="0 0 9 9"><rect x="0.5" y="0.5" width="7.5" height="7.5" rx="1.2" fill="#f6eec4" stroke="#101010" stroke-width="1"/><rect x="2" y="4" width="4.5" height="1.2" fill="#505050"/></svg>
<svg class="a" style="left:513px;top:280px;" width="11" height="11" viewBox="0 0 11 11"><defs><linearGradient id="cb" x1="0" y1="0" x2="0" y2="1"><stop offset="0" stop-color="#f4f8ff"/><stop offset="1" stop-color="#c4d8f0"/></linearGradient></defs><rect x="0.5" y="0.5" width="10" height="10" fill="url(#cb)" stroke="#8aa2c0"/><path d="M2.8 5.8l1.6 2.2 3.8-4.8" stroke="#111" stroke-width="1.5" fill="none"/></svg>
<div class="a" style="left:528px;top:289px;width:141px;height:1px;background:#1060f0"></div>
<svg class="a" style="left:670px;top:279px;" width="13" height="14" viewBox="0 0 13 14"><path d="M3 6v-2.5a2.5 2.5 0 0 1 5 0v1" stroke="#909090" stroke-width="1.4" fill="none"/><rect x="0.8" y="6" width="11.4" height="7.2" rx="1" fill="#f0c048" stroke="#c89028" stroke-width="0.8"/><rect x="3" y="8.5" width="7" height="2.5" fill="#f8e090"/></svg>
<svg class="a" style="left:688px;top:280px;" width="10" height="12" viewBox="0 0 10 12"><rect x="1" y="1.5" width="8" height="10" rx="1.5" fill="#f4f4f4" stroke="#808080" stroke-width="0.9"/><ellipse cx="5" cy="2.2" rx="4" ry="1.5" fill="#e0e0e0" stroke="#808080" stroke-width="0.8"/><path d="M3.5 4v6M6.5 4v6" stroke="#b0b0b0" stroke-width="0.8"/></svg>
<div class="a" style="left:503px;top:305px;width:147px;height:13px;background:linear-gradient(90deg,#0000ff 0.00% 6.72%,#0a28ff 6.72% 14.18%,#1040ff 14.18% 22.39%,#1850ff 22.39% 28.36%,#3068ff 28.36% 35.82%,#2080ff 35.82% 40.30%,#1890f8 40.30% 43.28%,#10a8ff 43.28% 47.76%,#38c0ff 47.76% 56.72%,#30d0ff 56.72% 58.96%,#00e8ff 58.96% 64.93%,#60f0f0 64.93% 66.42%,#20d0a0 66.42% 67.91%,#00e000 67.91% 72.39%,#80f000 72.39% 76.12%,#f0f000 76.12% 79.10%,#f0d020 79.10% 82.84%,#f8b000 82.84% 86.57%,#f88000 86.57% 91.04%,#f06000 91.04% 94.03%,#ff3000 94.03% 100.00%)"></div>
<div class="a" style="left:10px;top:459px;width:84px;height:14px;border-top:1px solid #9a9a96;border-left:1px solid #9a9a96;border-bottom:1px solid #fff;border-right:1px solid #fff"></div>
<div class="a" style="left:96px;top:459px;width:496px;height:14px;border-top:1px solid #9a9a96;border-left:1px solid #9a9a96;border-bottom:1px solid #fff;border-right:1px solid #fff"></div>
<div class="a" style="left:592px;top:459px;width:109px;height:14px;border-top:1px solid #9a9a96;border-left:1px solid #9a9a96;border-bottom:1px solid #fff;border-right:1px solid #fff"></div>
<div class="t" style="left:204.00px;top:9px;font:bold 11.5px 'Liberation Sans';line-height:1;letter-spacing:0.404px;color:#ffffff;">Unidata Workshop IDV - Map View - One Pane</div>
<div class="t" style="left:13.20px;top:26px;font:bold 10.2px 'Liberation Sans';line-height:1;letter-spacing:-0.154px;color:#262626;">File</div>
<div class="t" style="left:42.20px;top:26px;font:bold 10.2px 'Liberation Sans';line-height:1;letter-spacing:0.050px;color:#262626;">Edit</div>
<div class="t" style="left:73.40px;top:26px;font:bold 10.2px 'Liberation Sans';line-height:1;letter-spacing:0.285px;color:#262626;">Displays</div>
<div class="t" style="left:129.90px;top:26px;font:bold 10.2px 'Liberation Sans';line-height:1;letter-spacing:0.335px;color:#262626;">Data</div>
<div class="t" style="left:164.00px;top:26px;font:bold 10.2px 'Liberation Sans';line-height:1;letter-spacing:0.445px;color:#262626;">Tools</div>
<div class="t" style="left:203.20px;top:26px;font:bold 10.2px 'Liberation Sans';line-height:1;letter-spacing:0.107px;color:#262626;">Help</div>
<div class="t" style="left:308.00px;top:49px;font:bold 11.5px 'Liberation Sans';line-height:1;letter-spacing:-0.545px;color:#262626;">Workshop</div>
<div class="t" style="left:33.00px;top:78px;font:bold 10.2px 'Liberation Sans';line-height:1;letter-spacing:0.656px;color:#262626;">View</div>
<div class="t" style="left:69.30px;top:78px;font:bold 10.2px 'Liberation Sans';line-height:1;letter-spacing:0.122px;color:#262626;">Projections</div>
<div class="t" style="left:272.80px;top:77px;font:normal 8.7px 'Liberation Sans';line-height:1;letter-spacing:0.180px;color:#2a2a2a;">1998-06-29 12:00:00Z</div>
<div class="t" style="left:568.00px;top:67px;font:bold 13px 'Liberation Sans';line-height:1;letter-spacing:0.053px;color:#2a2a2a;">Legend</div>
<div class="t" style="left:528.80px;top:86px;font:bold 11.5px 'Liberation Sans';line-height:1;letter-spacing:-1.069px;color:#333;">Maps</div>
<div class="t" style="left:530.00px;top:104px;font:bold 10.2px 'Liberation Sans';line-height:1;letter-spacing:0.379px;color:#1060f0;">Default Background Maps</div>
<div class="t" style="left:503.70px;top:117px;font:bold 9.8px 'Liberation Sans';line-height:1;letter-spacing:-0.636px;color:#222;">World Coastlines</div>
<div class="t" style="left:503.70px;top:128px;font:bold 9.8px 'Liberation Sans';line-height:1;letter-spacing:-0.572px;color:#222;">Hi-Res US</div>
<div class="t" style="left:528.80px;top:146px;font:bold 11.5px 'Liberation Sans';line-height:1;letter-spacing:-0.610px;color:#333;">Plan Views</div>
<div class="t" style="left:530.00px;top:164px;font:bold 10.2px 'Liberation Sans';line-height:1;letter-spacing:0.427px;color:#1060f0;">PRECIP - Color-Filled Co...</div>
<div class="t" style="left:503.40px;top:190px;font:bold 9.8px 'Liberation Sans';line-height:1;letter-spacing:0.000px;color:#222;">0</div>
<div class="t" style="left:638.60px;top:190px;font:bold 9.8px 'Liberation Sans';line-height:1;letter-spacing:-0.506px;color:#222;">50</div>
<div class="t" style="left:530.00px;top:210px;font:bold 10.2px 'Liberation Sans';line-height:1;letter-spacing:0.530px;color:#1060f0;">Z - Contour Plan View</div>
<div class="t" style="left:503.10px;top:222px;font:bold 9.8px 'Liberation Sans';line-height:1;letter-spacing:-0.513px;color:#222;">Level: 500 hectopascals</div>
<div class="t" style="left:503.40px;top:246px;font:bold 9.8px 'Liberation Sans';line-height:1;letter-spacing:0.000px;color:#222;">0</div>
<div class="t" style="left:620.40px;top:246px;font:bold 9.8px 'Liberation Sans';line-height:1;letter-spacing:0.338px;color:#222;">16000</div>
<div class="t" style="left:528.80px;top:264px;font:bold 11.5px 'Liberation Sans';line-height:1;letter-spacing:-0.633px;color:#333;">3D Surface</div>
<div class="t" style="left:530.00px;top:282px;font:bold 10.2px 'Liberation Sans';line-height:1;letter-spacing:0.617px;color:#1060f0;">windspeed - Isosurface ...</div>
<div class="t" style="left:503.40px;top:295px;font:bold 9.8px 'Liberation Sans';line-height:1;letter-spacing:-0.241px;color:#222;">Value: 40 m/s</div>
<div class="t" style="left:503.40px;top:319px;font:bold 9.8px 'Liberation Sans';line-height:1;letter-spacing:0.000px;color:#222;">0</div>
<div class="t" style="left:620.40px;top:319px;font:bold 9.8px 'Liberation Sans';line-height:1;letter-spacing:0.338px;color:#222;">16000</div>
<div class="t" style="left:19.80px;top:462px;font:normal 11.5px 'Liberation Sans';line-height:1;letter-spacing:-0.069px;color:#2a2a2a;">21:25:11 GMT</div>
<div class="t" style="left:98.80px;top:462px;font:bold 11px 'Liberation Sans';line-height:1;letter-spacing:-0.294px;color:#2a2a2a;">Latitude:</div>
<div class="t" style="left:150.40px;top:462px;font:bold 11px 'Liberation Sans';line-height:1;letter-spacing:0.126px;color:#2a2a2a;">60.9</div>
<div class="t" style="left:183.50px;top:462px;font:bold 11px 'Liberation Sans';line-height:1;letter-spacing:-0.481px;color:#2a2a2a;">Longitude:</div>
<div class="t" style="left:242.30px;top:462px;font:bold 11px 'Liberation Sans';line-height:1;letter-spacing:0.599px;color:#2a2a2a;">-104.1</div>
<div class="t" style="left:285.00px;top:462px;font:bold 11px 'Liberation Sans';line-height:1;letter-spacing:-0.226px;color:#2a2a2a;">Altitude:</div>
<div class="t" style="left:332.30px;top:462px;font:bold 11px 'Liberation Sans';line-height:1;letter-spacing:0.324px;color:#2a2a2a;">26900.4 m</div>
</body></html>
